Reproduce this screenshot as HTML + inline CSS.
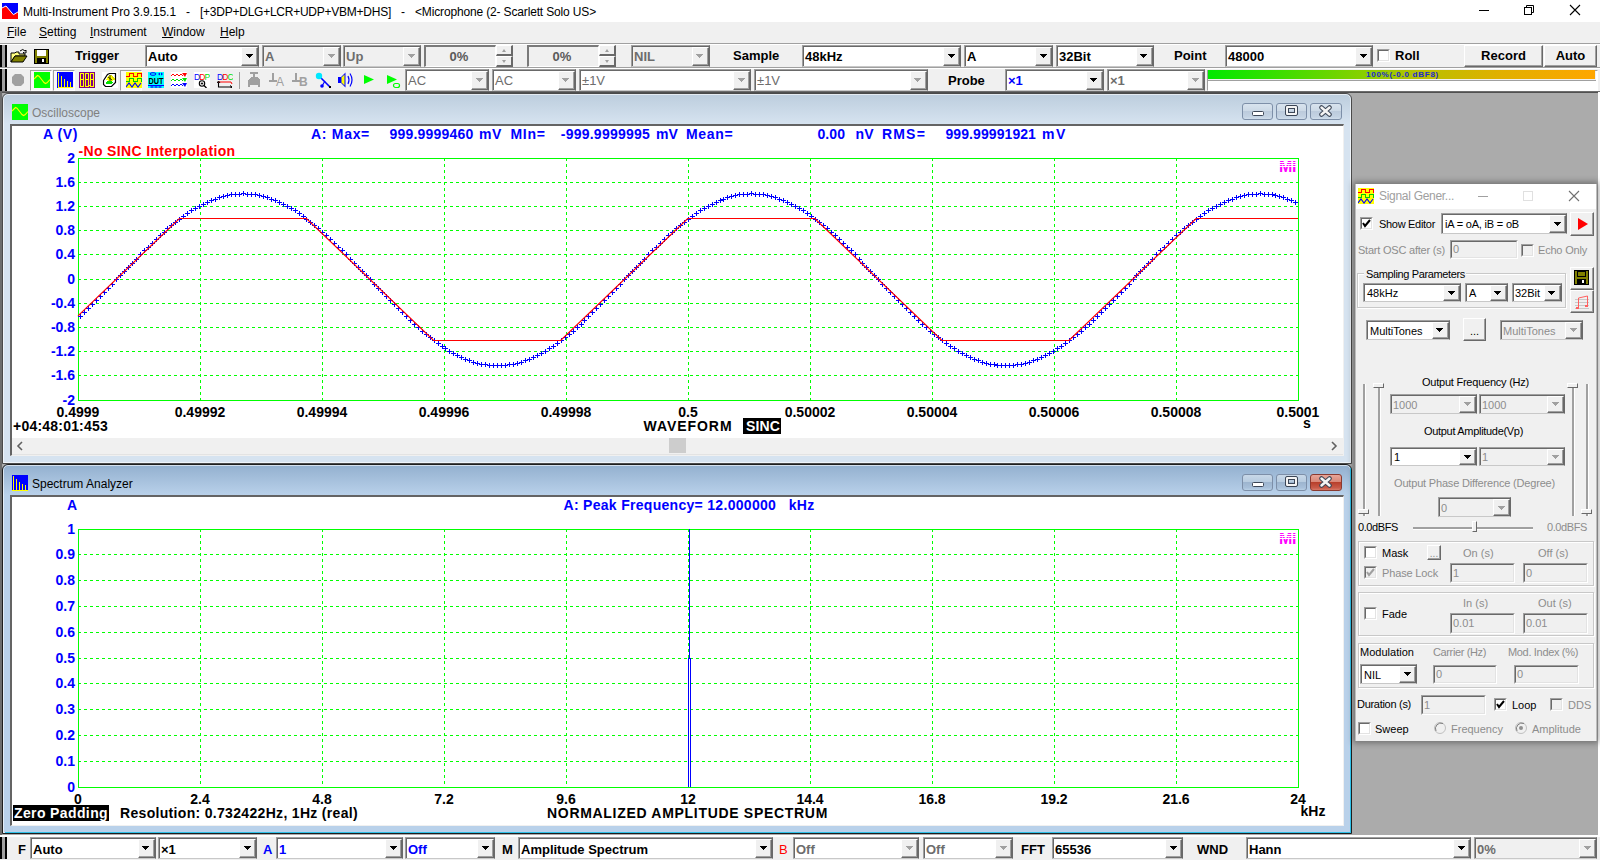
<!DOCTYPE html><html><head><meta charset="utf-8"><style>html,body{margin:0;padding:0;}body{width:1600px;height:860px;overflow:hidden;position:relative;background:#f0f0f0;font-family:'Liberation Sans', sans-serif;}</style></head><body>
<div style="position:absolute;left:0px;top:0px;width:1600px;height:22px;background:#fff"></div>
<svg style="position:absolute;left:2px;top:3px" width="16" height="16"><rect width="16" height="16" fill="#0000ff"/><path d="M0 16 L0 5 L4 3 L11.4 11.7 L16 8.9 L16 16 Z" fill="#ff0000"/><path d="M0 5 L4 3 L11.4 11.7 L16 8.9" stroke="#fff" stroke-width="1" fill="none"/></svg>
<div style="position:absolute;left:23px;top:5.84px;font:normal 12px/12px 'Liberation Sans', sans-serif;color:#000;white-space:pre;letter-spacing:-0.060px;">Multi-Instrument Pro 3.9.15.1</div>
<div style="position:absolute;left:186px;top:5.84px;font:normal 12px/12px 'Liberation Sans', sans-serif;color:#000;white-space:pre;">-</div>
<div style="position:absolute;left:200px;top:5.84px;font:normal 12px/12px 'Liberation Sans', sans-serif;color:#000;white-space:pre;letter-spacing:-0.247px;">[+3DP+DLG+LCR+UDP+VBM+DHS]</div>
<div style="position:absolute;left:401px;top:5.84px;font:normal 12px/12px 'Liberation Sans', sans-serif;color:#000;white-space:pre;">-</div>
<div style="position:absolute;left:415px;top:5.84px;font:normal 12px/12px 'Liberation Sans', sans-serif;color:#000;white-space:pre;letter-spacing:-0.154px;">&lt;Microphone (2- Scarlett Solo US&gt;</div>
<svg style="position:absolute;left:1470px;top:0px" width="130" height="22"><line x1="9" y1="10.5" x2="19" y2="10.5" stroke="#000" stroke-width="1"/><rect x="54.5" y="7.5" width="7" height="7" fill="none" stroke="#000"/><path d="M56.5 7.5 V5.5 H63.5 V12.5 H61.5" fill="none" stroke="#000"/><path d="M100 5 L110 15 M110 5 L100 15" stroke="#000" stroke-width="1.1"/></svg>
<div style="position:absolute;left:0px;top:22px;width:1600px;height:21px;background:#f0f0f0"></div>
<div style="position:absolute;left:7px;top:25.84px;font:normal 12px/12px 'Liberation Sans', sans-serif;color:#000;white-space:pre;"><u>F</u>ile</div>
<div style="position:absolute;left:39px;top:25.84px;font:normal 12px/12px 'Liberation Sans', sans-serif;color:#000;white-space:pre;"><u>S</u>etting</div>
<div style="position:absolute;left:90px;top:25.84px;font:normal 12px/12px 'Liberation Sans', sans-serif;color:#000;white-space:pre;"><u>I</u>nstrument</div>
<div style="position:absolute;left:162px;top:25.84px;font:normal 12px/12px 'Liberation Sans', sans-serif;color:#000;white-space:pre;"><u>W</u>indow</div>
<div style="position:absolute;left:220px;top:25.84px;font:normal 12px/12px 'Liberation Sans', sans-serif;color:#000;white-space:pre;"><u>H</u>elp</div>
<div style="position:absolute;left:0px;top:43px;width:1600px;height:1px;background:#a0a0a0"></div>
<div style="position:absolute;left:0px;top:44px;width:1600px;height:1px;background:#fff"></div>
<div style="position:absolute;left:0px;top:45px;width:2px;height:22px;background:#000"></div>
<div style="position:absolute;left:2px;top:45px;width:3px;height:22px;background:#a0a0a0"></div>
<div style="position:absolute;left:5px;top:45px;width:2px;height:22px;background:#000"></div>
<div style="position:absolute;left:0px;top:69px;width:2px;height:22px;background:#000"></div>
<div style="position:absolute;left:2px;top:69px;width:3px;height:22px;background:#a0a0a0"></div>
<div style="position:absolute;left:5px;top:69px;width:2px;height:22px;background:#000"></div>
<div style="position:absolute;left:0px;top:67px;width:1600px;height:1px;background:#a0a0a0"></div>
<div style="position:absolute;left:0px;top:68px;width:1600px;height:1px;background:#fff"></div>
<svg style="position:absolute;left:10px;top:48px" width="18" height="16"><path d="M1 5 L5 5 L6 4 L9 4 L9 6 L15 6 L15 8 L5 8 L1 14 Z" fill="#ffff80" stroke="#000" stroke-width="1"/><path d="M1 14 L5 8 L17 8 L13 14 Z" fill="#808000" stroke="#000" stroke-width="1"/><path d="M10 3 Q13 0 15 3 L16 2 L16 5 L13 5 L14 4" fill="none" stroke="#000" stroke-width="1"/></svg>
<svg style="position:absolute;left:34px;top:49px" width="15" height="15"><rect x="0.5" y="0.5" width="14" height="14" fill="#808000" stroke="#000"/><rect x="3" y="1" width="9" height="6" fill="#fff"/><rect x="3" y="9" width="9" height="5" fill="#000"/><rect x="8" y="10" width="2" height="3" fill="#fff"/></svg>
<div style="position:absolute;left:75px;top:49.00px;font:bold 13px/13px 'Liberation Sans', sans-serif;color:#000;white-space:pre;">Trigger</div>
<div style="position:absolute;left:145px;top:45px;width:114px;height:22px;box-sizing:border-box;background:#fff;border-top:1px solid #a0a0a0;border-left:1px solid #a0a0a0;border-right:1px solid #696969;border-bottom:1px solid #c8c8c8;"><div style="position:absolute;inset:0;border-top:1px solid #696969;border-left:1px solid #696969;"></div></div>
<div style="position:absolute;left:241px;top:47px;width:17px;height:19px;box-sizing:border-box;background:#f0f0f0;border-top:1px solid #fff;border-left:1px solid #fff;border-right:1px solid #696969;border-bottom:1px solid #696969;"><div style="position:absolute;inset:0;border-right:1px solid #a0a0a0;border-bottom:1px solid #a0a0a0;"></div></div>
<svg style="position:absolute;left:246px;top:54px" width="7" height="4" shape-rendering="crispEdges" fill="#000"><rect x="0" y="0" width="7" height="1"/><rect x="1" y="1" width="5" height="1"/><rect x="2" y="2" width="3" height="1"/><rect x="3" y="3" width="1" height="1"/></svg>
<div style="position:absolute;left:148px;top:50.00px;font:bold 13px/13px 'Liberation Sans', sans-serif;color:#000;white-space:pre;">Auto</div>
<div style="position:absolute;left:262px;top:45px;width:79px;height:22px;box-sizing:border-box;background:#f0f0f0;border-top:1px solid #a0a0a0;border-left:1px solid #a0a0a0;border-right:1px solid #696969;border-bottom:1px solid #c8c8c8;"><div style="position:absolute;inset:0;border-top:1px solid #696969;border-left:1px solid #696969;"></div></div>
<div style="position:absolute;left:323px;top:47px;width:17px;height:19px;box-sizing:border-box;background:#f0f0f0;border-top:1px solid #fff;border-left:1px solid #fff;border-right:1px solid #696969;border-bottom:1px solid #696969;"><div style="position:absolute;inset:0;border-right:1px solid #a0a0a0;border-bottom:1px solid #a0a0a0;"></div></div>
<svg style="position:absolute;left:328px;top:54px" width="7" height="4" shape-rendering="crispEdges" fill="#a0a0a0"><rect x="0" y="0" width="7" height="1"/><rect x="1" y="1" width="5" height="1"/><rect x="2" y="2" width="3" height="1"/><rect x="3" y="3" width="1" height="1"/></svg>
<div style="position:absolute;left:265px;top:50.00px;font:bold 13px/13px 'Liberation Sans', sans-serif;color:#6d6d6d;white-space:pre;">A</div>
<div style="position:absolute;left:343px;top:45px;width:78px;height:22px;box-sizing:border-box;background:#f0f0f0;border-top:1px solid #a0a0a0;border-left:1px solid #a0a0a0;border-right:1px solid #696969;border-bottom:1px solid #c8c8c8;"><div style="position:absolute;inset:0;border-top:1px solid #696969;border-left:1px solid #696969;"></div></div>
<div style="position:absolute;left:403px;top:47px;width:17px;height:19px;box-sizing:border-box;background:#f0f0f0;border-top:1px solid #fff;border-left:1px solid #fff;border-right:1px solid #696969;border-bottom:1px solid #696969;"><div style="position:absolute;inset:0;border-right:1px solid #a0a0a0;border-bottom:1px solid #a0a0a0;"></div></div>
<svg style="position:absolute;left:408px;top:54px" width="7" height="4" shape-rendering="crispEdges" fill="#a0a0a0"><rect x="0" y="0" width="7" height="1"/><rect x="1" y="1" width="5" height="1"/><rect x="2" y="2" width="3" height="1"/><rect x="3" y="3" width="1" height="1"/></svg>
<div style="position:absolute;left:346px;top:50.00px;font:bold 13px/13px 'Liberation Sans', sans-serif;color:#6d6d6d;white-space:pre;">Up</div>
<div style="position:absolute;left:424px;top:45px;width:89px;height:22px;box-sizing:border-box;background:#f0f0f0;border-top:1px solid #a0a0a0;border-left:1px solid #a0a0a0;border-right:1px solid #696969;border-bottom:1px solid #c8c8c8;"><div style="position:absolute;inset:0;border-top:1px solid #696969;border-left:1px solid #696969;"></div></div>
<div style="position:absolute;left:496px;top:45px;width:17px;height:22px;background:#f0f0f0"></div>
<div style="position:absolute;left:424px;top:45px;width:72px;height:22px;box-sizing:border-box;background:#f0f0f0;border-top:2px solid #7a7a7a;border-left:2px solid #7a7a7a;border-right:1px solid #fff;border-bottom:1px solid #fff"></div>
<div style="position:absolute;left:-41.0px;width:1000px;text-align:center;top:50.00px;font:bold 13px/13px 'Liberation Sans', sans-serif;color:#5a5a5a;white-space:pre;">0%</div>
<div style="position:absolute;left:496px;top:45px;width:17px;height:11px;box-sizing:border-box;background:#f0f0f0;border-top:1px solid #fff;border-left:1px solid #fff;border-right:2px solid #696969;border-bottom:2px solid #696969"></div>
<div style="position:absolute;left:496px;top:56px;width:17px;height:11px;box-sizing:border-box;background:#f0f0f0;border-top:1px solid #fff;border-left:1px solid #fff;border-right:2px solid #696969;border-bottom:2px solid #696969"></div>
<div style="position:absolute;left:502.0px;top:49px;width:0;height:0;border-left:2.5px solid transparent;border-right:2.5px solid transparent;border-bottom:3px solid #a0a0a0"></div>
<div style="position:absolute;left:502.0px;top:60px;width:0;height:0;border-left:2.5px solid transparent;border-right:2.5px solid transparent;border-top:3px solid #a0a0a0"></div>
<div style="position:absolute;left:527px;top:45px;width:89px;height:22px;box-sizing:border-box;background:#f0f0f0;border-top:1px solid #a0a0a0;border-left:1px solid #a0a0a0;border-right:1px solid #696969;border-bottom:1px solid #c8c8c8;"><div style="position:absolute;inset:0;border-top:1px solid #696969;border-left:1px solid #696969;"></div></div>
<div style="position:absolute;left:599px;top:45px;width:17px;height:22px;background:#f0f0f0"></div>
<div style="position:absolute;left:527px;top:45px;width:72px;height:22px;box-sizing:border-box;background:#f0f0f0;border-top:2px solid #7a7a7a;border-left:2px solid #7a7a7a;border-right:1px solid #fff;border-bottom:1px solid #fff"></div>
<div style="position:absolute;left:62.0px;width:1000px;text-align:center;top:50.00px;font:bold 13px/13px 'Liberation Sans', sans-serif;color:#5a5a5a;white-space:pre;">0%</div>
<div style="position:absolute;left:599px;top:45px;width:17px;height:11px;box-sizing:border-box;background:#f0f0f0;border-top:1px solid #fff;border-left:1px solid #fff;border-right:2px solid #696969;border-bottom:2px solid #696969"></div>
<div style="position:absolute;left:599px;top:56px;width:17px;height:11px;box-sizing:border-box;background:#f0f0f0;border-top:1px solid #fff;border-left:1px solid #fff;border-right:2px solid #696969;border-bottom:2px solid #696969"></div>
<div style="position:absolute;left:605.0px;top:49px;width:0;height:0;border-left:2.5px solid transparent;border-right:2.5px solid transparent;border-bottom:3px solid #a0a0a0"></div>
<div style="position:absolute;left:605.0px;top:60px;width:0;height:0;border-left:2.5px solid transparent;border-right:2.5px solid transparent;border-top:3px solid #a0a0a0"></div>
<div style="position:absolute;left:631px;top:45px;width:79px;height:22px;box-sizing:border-box;background:#f0f0f0;border-top:1px solid #a0a0a0;border-left:1px solid #a0a0a0;border-right:1px solid #696969;border-bottom:1px solid #c8c8c8;"><div style="position:absolute;inset:0;border-top:1px solid #696969;border-left:1px solid #696969;"></div></div>
<div style="position:absolute;left:692px;top:47px;width:17px;height:19px;box-sizing:border-box;background:#f0f0f0;border-top:1px solid #fff;border-left:1px solid #fff;border-right:1px solid #696969;border-bottom:1px solid #696969;"><div style="position:absolute;inset:0;border-right:1px solid #a0a0a0;border-bottom:1px solid #a0a0a0;"></div></div>
<svg style="position:absolute;left:696px;top:54px" width="7" height="4" shape-rendering="crispEdges" fill="#a0a0a0"><rect x="0" y="0" width="7" height="1"/><rect x="1" y="1" width="5" height="1"/><rect x="2" y="2" width="3" height="1"/><rect x="3" y="3" width="1" height="1"/></svg>
<div style="position:absolute;left:634px;top:50.00px;font:bold 13px/13px 'Liberation Sans', sans-serif;color:#6d6d6d;white-space:pre;">NIL</div>
<div style="position:absolute;left:733px;top:49.00px;font:bold 13px/13px 'Liberation Sans', sans-serif;color:#000;white-space:pre;">Sample</div>
<div style="position:absolute;left:802px;top:45px;width:159px;height:22px;box-sizing:border-box;background:#fff;border-top:1px solid #a0a0a0;border-left:1px solid #a0a0a0;border-right:1px solid #696969;border-bottom:1px solid #c8c8c8;"><div style="position:absolute;inset:0;border-top:1px solid #696969;border-left:1px solid #696969;"></div></div>
<div style="position:absolute;left:943px;top:47px;width:17px;height:19px;box-sizing:border-box;background:#f0f0f0;border-top:1px solid #fff;border-left:1px solid #fff;border-right:1px solid #696969;border-bottom:1px solid #696969;"><div style="position:absolute;inset:0;border-right:1px solid #a0a0a0;border-bottom:1px solid #a0a0a0;"></div></div>
<svg style="position:absolute;left:948px;top:54px" width="7" height="4" shape-rendering="crispEdges" fill="#000"><rect x="0" y="0" width="7" height="1"/><rect x="1" y="1" width="5" height="1"/><rect x="2" y="2" width="3" height="1"/><rect x="3" y="3" width="1" height="1"/></svg>
<div style="position:absolute;left:805px;top:50.00px;font:bold 13px/13px 'Liberation Sans', sans-serif;color:#000;white-space:pre;">48kHz</div>
<div style="position:absolute;left:964px;top:45px;width:89px;height:22px;box-sizing:border-box;background:#fff;border-top:1px solid #a0a0a0;border-left:1px solid #a0a0a0;border-right:1px solid #696969;border-bottom:1px solid #c8c8c8;"><div style="position:absolute;inset:0;border-top:1px solid #696969;border-left:1px solid #696969;"></div></div>
<div style="position:absolute;left:1035px;top:47px;width:17px;height:19px;box-sizing:border-box;background:#f0f0f0;border-top:1px solid #fff;border-left:1px solid #fff;border-right:1px solid #696969;border-bottom:1px solid #696969;"><div style="position:absolute;inset:0;border-right:1px solid #a0a0a0;border-bottom:1px solid #a0a0a0;"></div></div>
<svg style="position:absolute;left:1040px;top:54px" width="7" height="4" shape-rendering="crispEdges" fill="#000"><rect x="0" y="0" width="7" height="1"/><rect x="1" y="1" width="5" height="1"/><rect x="2" y="2" width="3" height="1"/><rect x="3" y="3" width="1" height="1"/></svg>
<div style="position:absolute;left:967px;top:50.00px;font:bold 13px/13px 'Liberation Sans', sans-serif;color:#000;white-space:pre;">A</div>
<div style="position:absolute;left:1056px;top:45px;width:98px;height:22px;box-sizing:border-box;background:#fff;border-top:1px solid #a0a0a0;border-left:1px solid #a0a0a0;border-right:1px solid #696969;border-bottom:1px solid #c8c8c8;"><div style="position:absolute;inset:0;border-top:1px solid #696969;border-left:1px solid #696969;"></div></div>
<div style="position:absolute;left:1136px;top:47px;width:17px;height:19px;box-sizing:border-box;background:#f0f0f0;border-top:1px solid #fff;border-left:1px solid #fff;border-right:1px solid #696969;border-bottom:1px solid #696969;"><div style="position:absolute;inset:0;border-right:1px solid #a0a0a0;border-bottom:1px solid #a0a0a0;"></div></div>
<svg style="position:absolute;left:1140px;top:54px" width="7" height="4" shape-rendering="crispEdges" fill="#000"><rect x="0" y="0" width="7" height="1"/><rect x="1" y="1" width="5" height="1"/><rect x="2" y="2" width="3" height="1"/><rect x="3" y="3" width="1" height="1"/></svg>
<div style="position:absolute;left:1059px;top:50.00px;font:bold 13px/13px 'Liberation Sans', sans-serif;color:#000;white-space:pre;">32Bit</div>
<div style="position:absolute;left:1174px;top:49.00px;font:bold 13px/13px 'Liberation Sans', sans-serif;color:#000;white-space:pre;">Point</div>
<div style="position:absolute;left:1225px;top:45px;width:148px;height:22px;box-sizing:border-box;background:#fff;border-top:1px solid #a0a0a0;border-left:1px solid #a0a0a0;border-right:1px solid #696969;border-bottom:1px solid #c8c8c8;"><div style="position:absolute;inset:0;border-top:1px solid #696969;border-left:1px solid #696969;"></div></div>
<div style="position:absolute;left:1355px;top:47px;width:17px;height:19px;box-sizing:border-box;background:#f0f0f0;border-top:1px solid #fff;border-left:1px solid #fff;border-right:1px solid #696969;border-bottom:1px solid #696969;"><div style="position:absolute;inset:0;border-right:1px solid #a0a0a0;border-bottom:1px solid #a0a0a0;"></div></div>
<svg style="position:absolute;left:1360px;top:54px" width="7" height="4" shape-rendering="crispEdges" fill="#000"><rect x="0" y="0" width="7" height="1"/><rect x="1" y="1" width="5" height="1"/><rect x="2" y="2" width="3" height="1"/><rect x="3" y="3" width="1" height="1"/></svg>
<div style="position:absolute;left:1228px;top:50.00px;font:bold 13px/13px 'Liberation Sans', sans-serif;color:#000;white-space:pre;">48000</div>
<div style="position:absolute;left:1377px;top:49px;width:13px;height:13px;box-sizing:border-box;background:#fff;border-top:1px solid #a0a0a0;border-left:1px solid #a0a0a0;border-right:1px solid #fff;border-bottom:1px solid #fff"><div style="position:absolute;inset:0;border-top:1px solid #696969;border-left:1px solid #696969;border-right:1px solid #e3e3e3;border-bottom:1px solid #e3e3e3"></div></div>
<div style="position:absolute;left:1395px;top:49.00px;font:bold 13px/13px 'Liberation Sans', sans-serif;color:#000;white-space:pre;">Roll</div>
<div style="position:absolute;left:1464px;top:45px;width:79px;height:22px;box-sizing:border-box;background:#f0f0f0;border-top:1px solid #fff;border-left:1px solid #fff;border-right:1px solid #696969;border-bottom:1px solid #696969"><div style="position:absolute;inset:0;border-right:1px solid #a0a0a0;border-bottom:1px solid #a0a0a0"></div></div>
<div style="position:absolute;left:1003.5px;width:1000px;text-align:center;top:49.00px;font:bold 13px/13px 'Liberation Sans', sans-serif;color:#000;white-space:pre;">Record</div>
<div style="position:absolute;left:1544px;top:45px;width:53px;height:22px;box-sizing:border-box;background:#f0f0f0;border-top:1px solid #fff;border-left:1px solid #fff;border-right:1px solid #696969;border-bottom:1px solid #696969"><div style="position:absolute;inset:0;border-right:1px solid #a0a0a0;border-bottom:1px solid #a0a0a0"></div></div>
<div style="position:absolute;left:1070.5px;width:1000px;text-align:center;top:49.00px;font:bold 13px/13px 'Liberation Sans', sans-serif;color:#000;white-space:pre;">Auto</div>
<svg style="position:absolute;left:11px;top:73px" width="14" height="14"><path d="M4 1 H10 L13 4 V10 L10 13 H4 L1 10 V4 Z" fill="#a0a0a0"/></svg>
<div style="position:absolute;left:30px;top:70px;width:22px;height:21px;box-sizing:border-box;border-top:1px solid #a0a0a0;border-left:1px solid #a0a0a0;border-right:1px solid #fff;border-bottom:1px solid #fff;background:#f8f8f8"></div>
<div style="position:absolute;left:53px;top:70px;width:22px;height:21px;box-sizing:border-box;border-top:1px solid #a0a0a0;border-left:1px solid #a0a0a0;border-right:1px solid #fff;border-bottom:1px solid #fff;background:#f8f8f8"></div>
<div style="position:absolute;left:120px;top:70px;width:22px;height:21px;box-sizing:border-box;border-top:1px solid #a0a0a0;border-left:1px solid #a0a0a0;border-right:1px solid #fff;border-bottom:1px solid #fff;background:#f8f8f8"></div>
<svg style="position:absolute;left:34px;top:72px" width="16" height="16"><rect width="16" height="16" fill="#00ff00"/><path d="M0 7 L2 5 L3.5 3.5 L5 4.2 L8 8 L10 10.5 L11.5 11.5 L13 10.8 L16 7.5" stroke="#ffff00" fill="none" stroke-width="1.1"/></svg>
<svg style="position:absolute;left:57px;top:72px" width="16" height="16"><rect width="16" height="16" fill="#0000ff"/><path d="M1 15.5 H16 M1.5 1 V15 M4.5 4 V15 M7.5 7 V15 M10.5 9 V15 M13.5 10 V15" stroke="#ffff00" stroke-width="1"/></svg>
<svg style="position:absolute;left:79px;top:72px" width="16" height="16"><rect width="16" height="16" fill="#800080"/><g fill="none" stroke="#ffff00" stroke-width="1" shape-rendering="crispEdges"><rect x="1.5" y="1.5" width="3" height="6" /><rect x="1.5" y="7.5" width="3" height="7" /><rect x="6.5" y="1.5" width="3" height="6" /><rect x="6.5" y="7.5" width="3" height="7" /><rect x="11.5" y="1.5" width="3" height="6" /><rect x="11.5" y="7.5" width="3" height="7" /></g><rect x="10" y="13" width="1" height="1" fill="#ffff00"/></svg>
<svg style="position:absolute;left:102px;top:72px" width="16" height="16" shape-rendering="crispEdges"><rect width="16" height="16" fill="#fff"/><path d="M1.5 8.5 L5.5 2.5 L7.5 1.5 H13.5 V10.5 L9.5 14.5 H3.5 L1.5 12.5 Z" fill="none" stroke="#000" stroke-width="1.2" shape-rendering="auto"/><path d="M4 8 L6 4 L8 3 L10 4 L12 7 L11 9 L8 9 Z" fill="#ffff00"/><path d="M9 3 L13 7 L12 9 Z" fill="#e0e000"/><path d="M3 11 L5 9 L9 9 L11 10 L10 12 L5 12 Z" fill="#00e000"/><path d="M8 3 V9 M6 5 L10 8" stroke="#000" stroke-width="0.8" shape-rendering="auto"/></svg>
<svg style="position:absolute;left:126px;top:72px" width="16" height="16" shape-rendering="crispEdges"><rect width="16" height="16" fill="#ffff00"/><path d="M0 4.5 H3.5 V1.5 H7.5 V4.5 H11.5 V1.5 H15.5 V4.5" stroke="#ff0000" fill="none" stroke-width="1.2"/><path d="M0 9.5 H3.5 V6.5 H7.5 V9.5 H11.5 V6.5 H15.5 V9.5" stroke="#00d000" fill="none" stroke-width="1.2"/><path d="M0 15 L3 11 L6 15 L9 11 L12 15 L15 11" stroke="#0000ff" fill="none" stroke-width="1.1" shape-rendering="auto"/></svg>
<svg style="position:absolute;left:148px;top:72px" width="16" height="16"><rect width="16" height="16" fill="#00ffff"/><ellipse cx="5" cy="2" rx="3" ry="1.3" fill="none" stroke="#0000ff" stroke-width="1"/><path d="M10 2 L12 0.5 V3.5 Z M15 2 L13 0.5 V3.5 Z" fill="#0000ff"/><text x="8" y="12" text-anchor="middle" font-family="Liberation Sans" font-weight="bold" font-size="9" fill="#000" textLength="15" lengthAdjust="spacingAndGlyphs">DUT</text><path d="M0 13.5 H16" stroke="#0000ff"/><circle cx="4" cy="15" r="1.1" fill="none" stroke="#0000ff" stroke-width="0.8"/><circle cx="8" cy="15" r="1.1" fill="none" stroke="#0000ff" stroke-width="0.8"/><circle cx="12" cy="15" r="1.1" fill="none" stroke="#0000ff" stroke-width="0.8"/></svg>
<svg style="position:absolute;left:171px;top:72px" width="16" height="16"><rect width="16" height="16" fill="#fff"/><path d="M0 4 L2 2 L4 4 L6 2 L8 4 L10 2 L12 4" stroke="#ff0000" fill="none"/><path d="M0 9 L2 7 L4 9 L6 7 L8 9 L10 7 L12 9" stroke="#00e000" fill="none"/><path d="M0 14 L2 12 L4 14 L6 12 L8 14 L10 12 L12 14" stroke="#0000ff" fill="none"/><path d="M11 1 H16 L14 5 Z" fill="#ff0000"/><path d="M11 6 H16 L14 10 Z" fill="#00e000"/><path d="M11 11 H16 L14 15 Z" fill="#0000ff"/></svg>
<svg style="position:absolute;left:194px;top:72px" width="16" height="16"><rect width="16" height="16" fill="#fff"/><text x="0" y="7.5" font-family="Liberation Sans" font-size="8.5" fill="#0000ff">D</text><text x="5.3" y="7.5" font-family="Liberation Sans" font-size="8.5" fill="#ff0000">D</text><text x="10.6" y="7.5" font-family="Liberation Sans" font-size="8.5" fill="#00e000">P</text><circle cx="8" cy="11.5" r="2.7" fill="none" stroke="#000" stroke-width="1.1"/><path d="M6.8 11.5 H9.2 M8 10.3 V12.7" stroke="#000" stroke-width="0.9"/><path d="M10 13.5 L12.5 16" stroke="#000" stroke-width="1.3"/></svg>
<svg style="position:absolute;left:217px;top:72px" width="16" height="16"><text x="0" y="7.5" font-family="Liberation Sans" font-size="8.5" fill="#0000ff">D</text><text x="5.3" y="7.5" font-family="Liberation Sans" font-size="8.5" fill="#ff0000">D</text><text x="10.6" y="7.5" font-family="Liberation Sans" font-size="8.5" fill="#00e000">C</text><path d="M1.5 10 V15 H15" stroke="#000" fill="none" stroke-width="1.1"/><path d="M1.5 10 H14 L15 12" stroke="#ff0000" fill="none" stroke-width="1"/><path d="M0 11 L1.5 9 L3 11 M13 13.5 L15 15 L13 16.5" stroke="#000" fill="none" stroke-width="1"/></svg>
<div style="position:absolute;left:239px;top:72px;width:1px;height:17px;background:#a0a0a0"></div>
<svg style="position:absolute;left:247px;top:72px" width="14" height="16" shape-rendering="crispEdges" fill="#a0a0a0"><rect x="3" y="0" width="8" height="2"/><rect x="6" y="2" width="2" height="3"/><path d="M4 5 H10 L13 8 V15 H11 V13 H3 V15 H1 V8 Z"/></svg>
<svg style="position:absolute;left:268px;top:72px" width="40" height="16" shape-rendering="crispEdges" fill="#a0a0a0"><rect x="4" y="1" width="2" height="8"/><rect x="1" y="8" width="8" height="2"/><rect x="27" y="1" width="2" height="8"/><rect x="24" y="8" width="8" height="2"/></svg>
<div style="position:absolute;left:276px;top:75.84px;font:normal 12px/12px 'Liberation Sans', sans-serif;color:#a0a0a0;white-space:pre;">A</div>
<div style="position:absolute;left:299px;top:75.84px;font:bold 12px/12px 'Liberation Sans', sans-serif;color:#a0a0a0;white-space:pre;">B</div>
<svg style="position:absolute;left:315px;top:72px" width="17" height="16"><path d="M5 5 L15 15" stroke="#0000ff" stroke-width="1.6"/><path d="M10 9 L7 14" stroke="#0000ff" stroke-width="1.2"/><circle cx="4" cy="4" r="3.2" fill="#00e8ff"/><circle cx="7" cy="14" r="1.8" fill="#0000ff"/><rect x="14" y="14" width="2" height="2" fill="#000"/></svg>
<svg style="position:absolute;left:337px;top:72px" width="18" height="16"><path d="M1 5 H4 L8.5 0.5 V15.5 L4 11 H1 Z" fill="#0000ff"/><path d="M4.5 5.5 L7.5 2.5 V13.5 L4.5 10.5 Z" fill="#ffff00"/><path d="M11 4 Q13 8 11 12 M13 1.5 Q17 8 13 14.5" stroke="#0000ff" fill="none" stroke-width="1.2"/></svg>
<svg style="position:absolute;left:363px;top:74px" width="13" height="12"><path d="M1 1 L11 5.5 L1 10 Z" fill="#00ff00"/></svg>
<svg style="position:absolute;left:386px;top:74px" width="16" height="15"><path d="M1 1 L11 5.5 L1 10 Z" fill="#00ff00"/><rect x="7.5" y="9.5" width="6" height="4" rx="2" fill="none" stroke="#00ff00" stroke-width="1.2"/></svg>
<div style="position:absolute;left:405px;top:69px;width:84px;height:22px;box-sizing:border-box;background:#fff;border-top:1px solid #a0a0a0;border-left:1px solid #a0a0a0;border-right:1px solid #696969;border-bottom:1px solid #c8c8c8;"><div style="position:absolute;inset:0;border-top:1px solid #696969;border-left:1px solid #696969;"></div></div>
<div style="position:absolute;left:471px;top:71px;width:17px;height:19px;box-sizing:border-box;background:#f0f0f0;border-top:1px solid #fff;border-left:1px solid #fff;border-right:1px solid #696969;border-bottom:1px solid #696969;"><div style="position:absolute;inset:0;border-right:1px solid #a0a0a0;border-bottom:1px solid #a0a0a0;"></div></div>
<svg style="position:absolute;left:476px;top:78px" width="7" height="4" shape-rendering="crispEdges" fill="#a0a0a0"><rect x="0" y="0" width="7" height="1"/><rect x="1" y="1" width="5" height="1"/><rect x="2" y="2" width="3" height="1"/><rect x="3" y="3" width="1" height="1"/></svg>
<div style="position:absolute;left:408px;top:74.00px;font:normal 13px/13px 'Liberation Sans', sans-serif;color:#6d6d6d;white-space:pre;">AC</div>
<div style="position:absolute;left:492px;top:69px;width:84px;height:22px;box-sizing:border-box;background:#fff;border-top:1px solid #a0a0a0;border-left:1px solid #a0a0a0;border-right:1px solid #696969;border-bottom:1px solid #c8c8c8;"><div style="position:absolute;inset:0;border-top:1px solid #696969;border-left:1px solid #696969;"></div></div>
<div style="position:absolute;left:558px;top:71px;width:17px;height:19px;box-sizing:border-box;background:#f0f0f0;border-top:1px solid #fff;border-left:1px solid #fff;border-right:1px solid #696969;border-bottom:1px solid #696969;"><div style="position:absolute;inset:0;border-right:1px solid #a0a0a0;border-bottom:1px solid #a0a0a0;"></div></div>
<svg style="position:absolute;left:562px;top:78px" width="7" height="4" shape-rendering="crispEdges" fill="#a0a0a0"><rect x="0" y="0" width="7" height="1"/><rect x="1" y="1" width="5" height="1"/><rect x="2" y="2" width="3" height="1"/><rect x="3" y="3" width="1" height="1"/></svg>
<div style="position:absolute;left:495px;top:74.00px;font:normal 13px/13px 'Liberation Sans', sans-serif;color:#6d6d6d;white-space:pre;">AC</div>
<div style="position:absolute;left:579px;top:69px;width:172px;height:22px;box-sizing:border-box;background:#fff;border-top:1px solid #a0a0a0;border-left:1px solid #a0a0a0;border-right:1px solid #696969;border-bottom:1px solid #c8c8c8;"><div style="position:absolute;inset:0;border-top:1px solid #696969;border-left:1px solid #696969;"></div></div>
<div style="position:absolute;left:733px;top:71px;width:17px;height:19px;box-sizing:border-box;background:#f0f0f0;border-top:1px solid #fff;border-left:1px solid #fff;border-right:1px solid #696969;border-bottom:1px solid #696969;"><div style="position:absolute;inset:0;border-right:1px solid #a0a0a0;border-bottom:1px solid #a0a0a0;"></div></div>
<svg style="position:absolute;left:738px;top:78px" width="7" height="4" shape-rendering="crispEdges" fill="#a0a0a0"><rect x="0" y="0" width="7" height="1"/><rect x="1" y="1" width="5" height="1"/><rect x="2" y="2" width="3" height="1"/><rect x="3" y="3" width="1" height="1"/></svg>
<div style="position:absolute;left:582px;top:74.00px;font:normal 13px/13px 'Liberation Sans', sans-serif;color:#6d6d6d;white-space:pre;">±1V</div>
<div style="position:absolute;left:754px;top:69px;width:174px;height:22px;box-sizing:border-box;background:#fff;border-top:1px solid #a0a0a0;border-left:1px solid #a0a0a0;border-right:1px solid #696969;border-bottom:1px solid #c8c8c8;"><div style="position:absolute;inset:0;border-top:1px solid #696969;border-left:1px solid #696969;"></div></div>
<div style="position:absolute;left:910px;top:71px;width:17px;height:19px;box-sizing:border-box;background:#f0f0f0;border-top:1px solid #fff;border-left:1px solid #fff;border-right:1px solid #696969;border-bottom:1px solid #696969;"><div style="position:absolute;inset:0;border-right:1px solid #a0a0a0;border-bottom:1px solid #a0a0a0;"></div></div>
<svg style="position:absolute;left:914px;top:78px" width="7" height="4" shape-rendering="crispEdges" fill="#a0a0a0"><rect x="0" y="0" width="7" height="1"/><rect x="1" y="1" width="5" height="1"/><rect x="2" y="2" width="3" height="1"/><rect x="3" y="3" width="1" height="1"/></svg>
<div style="position:absolute;left:757px;top:74.00px;font:normal 13px/13px 'Liberation Sans', sans-serif;color:#6d6d6d;white-space:pre;">±1V</div>
<div style="position:absolute;left:948px;top:74.00px;font:bold 13px/13px 'Liberation Sans', sans-serif;color:#000;white-space:pre;">Probe</div>
<div style="position:absolute;left:1005px;top:69px;width:99px;height:22px;box-sizing:border-box;background:#fff;border-top:1px solid #a0a0a0;border-left:1px solid #a0a0a0;border-right:1px solid #696969;border-bottom:1px solid #c8c8c8;"><div style="position:absolute;inset:0;border-top:1px solid #696969;border-left:1px solid #696969;"></div></div>
<div style="position:absolute;left:1086px;top:71px;width:17px;height:19px;box-sizing:border-box;background:#f0f0f0;border-top:1px solid #fff;border-left:1px solid #fff;border-right:1px solid #696969;border-bottom:1px solid #696969;"><div style="position:absolute;inset:0;border-right:1px solid #a0a0a0;border-bottom:1px solid #a0a0a0;"></div></div>
<svg style="position:absolute;left:1090px;top:78px" width="7" height="4" shape-rendering="crispEdges" fill="#000"><rect x="0" y="0" width="7" height="1"/><rect x="1" y="1" width="5" height="1"/><rect x="2" y="2" width="3" height="1"/><rect x="3" y="3" width="1" height="1"/></svg>
<div style="position:absolute;left:1008px;top:74.00px;font:bold 13px/13px 'Liberation Sans', sans-serif;color:#0000ff;white-space:pre;">×1</div>
<div style="position:absolute;left:1107px;top:69px;width:98px;height:22px;box-sizing:border-box;background:#fff;border-top:1px solid #a0a0a0;border-left:1px solid #a0a0a0;border-right:1px solid #696969;border-bottom:1px solid #c8c8c8;"><div style="position:absolute;inset:0;border-top:1px solid #696969;border-left:1px solid #696969;"></div></div>
<div style="position:absolute;left:1187px;top:71px;width:17px;height:19px;box-sizing:border-box;background:#f0f0f0;border-top:1px solid #fff;border-left:1px solid #fff;border-right:1px solid #696969;border-bottom:1px solid #696969;"><div style="position:absolute;inset:0;border-right:1px solid #a0a0a0;border-bottom:1px solid #a0a0a0;"></div></div>
<svg style="position:absolute;left:1192px;top:78px" width="7" height="4" shape-rendering="crispEdges" fill="#a0a0a0"><rect x="0" y="0" width="7" height="1"/><rect x="1" y="1" width="5" height="1"/><rect x="2" y="2" width="3" height="1"/><rect x="3" y="3" width="1" height="1"/></svg>
<div style="position:absolute;left:1110px;top:74.00px;font:bold 13px/13px 'Liberation Sans', sans-serif;color:#6d6d6d;white-space:pre;">×1</div>
<div style="position:absolute;left:1207px;top:70px;width:391px;height:21px;box-sizing:border-box;border-top:1px solid #a0a0a0;border-left:1px solid #a0a0a0;border-right:1px solid #fff;border-bottom:1px solid #fff;background:#fff"></div>
<div style="position:absolute;left:1208px;top:71px;width:388px;height:9px;background:#f0f0f0"></div>
<div style="position:absolute;left:1208px;top:70px;width:387px;height:9px;background:linear-gradient(to right,#00e800,#30e000 15%,#88d000 40%,#b8c000 55%,#e0b000 75%,#ffa600)"></div>
<div style="position:absolute;left:1366px;top:70.73px;font:bold 8px/8px 'Liberation Sans', sans-serif;color:#1a2ad0;white-space:pre;letter-spacing:0.747px;">100%(-0.0 dBF8)</div>
<div style="position:absolute;left:1208px;top:80px;width:388px;height:1px;background:#a0a0a0"></div>
<div style="position:absolute;left:0px;top:91px;width:1600px;height:1px;background:#6d6d6d"></div>
<div style="position:absolute;left:0px;top:92px;width:1598px;height:743px;background:#ababab"></div>
<div style="position:absolute;left:0px;top:92px;width:1598px;height:1px;background:#505050"></div>
<div style="position:absolute;left:1598px;top:92px;width:2px;height:743px;background:#fff"></div>
<div style="position:absolute;left:0px;top:92px;width:2px;height:743px;background:#6d6d6d"></div>
<div style="position:absolute;left:2px;top:93px;width:1350px;height:371px;box-sizing:border-box;border:1px solid #4a4a4a;border-radius:6px 6px 0 0;background:linear-gradient(to bottom,#bccddd 0px,#d6e3f0 30px,#d6e3f0 100%);overflow:hidden"><div style="position:absolute;inset:0;border:1px solid rgba(255,255,255,0.6);border-radius:5px 5px 0 0"></div></div>
<svg style="position:absolute;left:12px;top:104px" width="16" height="16"><rect width="16" height="16" fill="#00ff00"/><path d="M0 7 L2 5 L3.5 3.5 L5 4.2 L8 8 L10 10.5 L11.5 11.5 L13 10.8 L16 7.5" stroke="#ffff00" fill="none" stroke-width="1.1"/></svg>
<div style="position:absolute;left:32px;top:106.84px;font:normal 12px/12px 'Liberation Sans', sans-serif;color:#808080;white-space:pre;">Oscilloscope</div>
<div style="position:absolute;left:1242px;top:103px;width:31px;height:17px;box-sizing:border-box;border:1px solid #7d8fa8;border-radius:3px;background:linear-gradient(to bottom,#d8e3ee,#ccd9e6 45%,#bccbdc 50%,#c4d3e3 85%,#d0deeb)"></div>
<div style="position:absolute;left:1252px;top:111px;width:10px;height:3px;background:#fff;border:1px solid #3c4656;border-radius:1.5px"></div>
<div style="position:absolute;left:1276px;top:103px;width:31px;height:17px;box-sizing:border-box;border:1px solid #7d8fa8;border-radius:3px;background:linear-gradient(to bottom,#d8e3ee,#ccd9e6 45%,#bccbdc 50%,#c4d3e3 85%,#d0deeb)"></div>
<div style="position:absolute;left:1286px;top:106px;width:7px;height:5px;border:2px solid #f4f4f4;outline:1px solid #3c4656;box-shadow:inset 0 0 0 1px #3c4656;border-radius:1px"></div>
<div style="position:absolute;left:1310px;top:103px;width:32px;height:17px;box-sizing:border-box;border:1px solid #7d8fa8;border-radius:3px;background:linear-gradient(to bottom,#d8e3ee,#ccd9e6 45%,#bccbdc 50%,#c4d3e3 85%,#d0deeb)"></div>
<svg style="position:absolute;left:1319px;top:105px" width="13" height="12"><path d="M2.5 2.5 L10.5 9.5 M10.5 2.5 L2.5 9.5" stroke="#3c4656" stroke-width="4.5" stroke-linecap="round"/><path d="M2.5 2.5 L10.5 9.5 M10.5 2.5 L2.5 9.5" stroke="#f4f4f4" stroke-width="2.5" stroke-linecap="round"/></svg>
<div style="position:absolute;left:10px;top:124px;width:1334px;height:332px;box-sizing:border-box;background:#fff;border-top:2px solid #646464;border-left:2px solid #646464;border-right:1px solid #f0f0f0;border-bottom:1px solid #f0f0f0"></div>
<div style="position:absolute;left:2px;top:464px;width:1350px;height:370px;box-sizing:border-box;border:1px solid #1e1e1e;border-radius:6px 6px 0 0;background:linear-gradient(to bottom,#93b0cf 0px,#b9d1ea 30px,#b9d1ea 100%);overflow:hidden"><div style="position:absolute;inset:0;border:1px solid rgba(255,255,255,0.6);border-radius:5px 5px 0 0"></div></div>
<div style="position:absolute;left:1350px;top:468px;width:1px;height:365px;background:#2ec0e8"></div>
<div style="position:absolute;left:5px;top:832px;width:1345px;height:1px;background:#2ec0e8"></div>
<svg style="position:absolute;left:12px;top:475px" width="16" height="16"><rect width="16" height="16" fill="#0000ff"/><path d="M0 15.5 H16 M1.5 1 V15 M4.5 4 V15 M7.5 7 V15 M10.5 9 V15 M13.5 10 V15" stroke="#ffff00" stroke-width="1"/></svg>
<div style="position:absolute;left:32px;top:477.84px;font:normal 12px/12px 'Liberation Sans', sans-serif;color:#000;white-space:pre;">Spectrum Analyzer</div>
<div style="position:absolute;left:1242px;top:474px;width:31px;height:17px;box-sizing:border-box;border:1px solid #7d8fa8;border-radius:3px;background:linear-gradient(to bottom,#c8d8e8,#b8cce0 45%,#9db5cf 50%,#a8c0da 85%,#b8d0e6)"></div>
<div style="position:absolute;left:1252px;top:482px;width:10px;height:3px;background:#fff;border:1px solid #3c4656;border-radius:1.5px"></div>
<div style="position:absolute;left:1276px;top:474px;width:31px;height:17px;box-sizing:border-box;border:1px solid #7d8fa8;border-radius:3px;background:linear-gradient(to bottom,#c8d8e8,#b8cce0 45%,#9db5cf 50%,#a8c0da 85%,#b8d0e6)"></div>
<div style="position:absolute;left:1286px;top:477px;width:7px;height:5px;border:2px solid #f4f4f4;outline:1px solid #3c4656;box-shadow:inset 0 0 0 1px #3c4656;border-radius:1px"></div>
<div style="position:absolute;left:1310px;top:474px;width:32px;height:17px;box-sizing:border-box;border:1px solid #8a3a30;border-radius:3px;background:linear-gradient(to bottom,#e8a598,#d88878 45%,#b8402c 50%,#c85a48 85%,#d87a68)"></div>
<svg style="position:absolute;left:1319px;top:476px" width="13" height="12"><path d="M2.5 2.5 L10.5 9.5 M10.5 2.5 L2.5 9.5" stroke="#3c4656" stroke-width="4.5" stroke-linecap="round"/><path d="M2.5 2.5 L10.5 9.5 M10.5 2.5 L2.5 9.5" stroke="#f4f4f4" stroke-width="2.5" stroke-linecap="round"/></svg>
<div style="position:absolute;left:10px;top:495px;width:1334px;height:331px;box-sizing:border-box;background:#fff;border-top:2px solid #646464;border-left:2px solid #646464;border-right:1px solid #f0f0f0;border-bottom:1px solid #f0f0f0"></div>
<div style="position:absolute;left:12px;top:438px;width:1331px;height:16px;background:#f0f0f0"></div>
<div style="position:absolute;left:669px;top:438px;width:17px;height:15px;background:#cdcdcd"></div>
<div style="position:absolute;left:12px;top:454px;width:1331px;height:1px;background:#e3e3e3"></div>
<svg style="position:absolute;left:14px;top:440px" width="12" height="12"><path d="M8 2 L4 6 L8 10" stroke="#606060" stroke-width="1.6" fill="none"/></svg>
<svg style="position:absolute;left:1328px;top:440px" width="12" height="12"><path d="M4 2 L8 6 L4 10" stroke="#606060" stroke-width="1.6" fill="none"/></svg>
<svg style="position:absolute;left:0;top:0" width="1600" height="860" shape-rendering="crispEdges"><line x1="200.5" y1="158" x2="200.5" y2="400" stroke="#00ff00" stroke-width="1" stroke-dasharray="3 3"/><line x1="322.5" y1="158" x2="322.5" y2="400" stroke="#00ff00" stroke-width="1" stroke-dasharray="3 3"/><line x1="444.5" y1="158" x2="444.5" y2="400" stroke="#00ff00" stroke-width="1" stroke-dasharray="3 3"/><line x1="566.5" y1="158" x2="566.5" y2="400" stroke="#00ff00" stroke-width="1" stroke-dasharray="3 3"/><line x1="688.5" y1="158" x2="688.5" y2="400" stroke="#00ff00" stroke-width="1" stroke-dasharray="3 3"/><line x1="810.5" y1="158" x2="810.5" y2="400" stroke="#00ff00" stroke-width="1" stroke-dasharray="3 3"/><line x1="932.5" y1="158" x2="932.5" y2="400" stroke="#00ff00" stroke-width="1" stroke-dasharray="3 3"/><line x1="1054.5" y1="158" x2="1054.5" y2="400" stroke="#00ff00" stroke-width="1" stroke-dasharray="3 3"/><line x1="1176.5" y1="158" x2="1176.5" y2="400" stroke="#00ff00" stroke-width="1" stroke-dasharray="3 3"/><line x1="78" y1="182.5" x2="1298" y2="182.5" stroke="#00ff00" stroke-width="1" stroke-dasharray="3 3"/><line x1="78" y1="206.5" x2="1298" y2="206.5" stroke="#00ff00" stroke-width="1" stroke-dasharray="3 3"/><line x1="78" y1="230.5" x2="1298" y2="230.5" stroke="#00ff00" stroke-width="1" stroke-dasharray="3 3"/><line x1="78" y1="254.5" x2="1298" y2="254.5" stroke="#00ff00" stroke-width="1" stroke-dasharray="3 3"/><line x1="78" y1="279.5" x2="1298" y2="279.5" stroke="#00ff00" stroke-width="1" stroke-dasharray="3 3"/><line x1="78" y1="303.5" x2="1298" y2="303.5" stroke="#00ff00" stroke-width="1" stroke-dasharray="3 3"/><line x1="78" y1="327.5" x2="1298" y2="327.5" stroke="#00ff00" stroke-width="1" stroke-dasharray="3 3"/><line x1="78" y1="351.5" x2="1298" y2="351.5" stroke="#00ff00" stroke-width="1" stroke-dasharray="3 3"/><line x1="78" y1="375.5" x2="1298" y2="375.5" stroke="#00ff00" stroke-width="1" stroke-dasharray="3 3"/><rect x="78.5" y="158.5" width="1220" height="242" fill="none" stroke="#00ff00" stroke-width="1"/><path d="M78 316.5 h5 M80.5 314 v5 M82 312.5 h5 M84.5 310 v5 M86 308.5 h5 M88.5 306 v5 M90 304.5 h5 M92.5 302 v5 M94 300.5 h5 M96.5 298 v5 M98 296.5 h5 M100.5 294 v5 M102 292.5 h5 M104.5 290 v5 M106 288.5 h5 M108.5 286 v5 M110 284.5 h5 M112.5 282 v5 M114 279.5 h5 M116.5 277 v5 M118 275.5 h5 M120.5 273 v5 M122 271.5 h5 M124.5 269 v5 M126 267.5 h5 M128.5 265 v5 M130 263.5 h5 M132.5 261 v5 M134 259.5 h5 M136.5 257 v5 M138 254.5 h5 M140.5 252 v5 M142 250.5 h5 M144.5 248 v5 M146 247.5 h5 M148.5 245 v5 M150 243.5 h5 M152.5 241 v5 M154 239.5 h5 M156.5 237 v5 M158 235.5 h5 M160.5 233 v5 M162 232.5 h5 M164.5 230 v5 M165 228.5 h5 M167.5 226 v5 M169 225.5 h5 M171.5 223 v5 M173 222.5 h5 M175.5 220 v5 M177 219.5 h5 M179.5 217 v5 M181 216.5 h5 M183.5 214 v5 M185 213.5 h5 M187.5 211 v5 M189 210.5 h5 M191.5 208 v5 M193 208.5 h5 M195.5 206 v5 M197 206.5 h5 M199.5 204 v5 M201 204.5 h5 M203.5 202 v5 M205 202.5 h5 M207.5 200 v5 M209 200.5 h5 M211.5 198 v5 M213 199.5 h5 M215.5 197 v5 M217 197.5 h5 M219.5 195 v5 M221 196.5 h5 M223.5 194 v5 M225 195.5 h5 M227.5 193 v5 M229 194.5 h5 M231.5 192 v5 M233 194.5 h5 M235.5 192 v5 M237 194.5 h5 M239.5 192 v5 M241 193.5 h5 M243.5 191 v5 M245 194.5 h5 M247.5 192 v5 M249 194.5 h5 M251.5 192 v5 M253 194.5 h5 M255.5 192 v5 M257 195.5 h5 M259.5 193 v5 M261 196.5 h5 M263.5 194 v5 M265 197.5 h5 M267.5 195 v5 M269 199.5 h5 M271.5 197 v5 M273 200.5 h5 M275.5 198 v5 M277 202.5 h5 M279.5 200 v5 M281 204.5 h5 M283.5 202 v5 M285 206.5 h5 M287.5 204 v5 M289 208.5 h5 M291.5 206 v5 M293 210.5 h5 M295.5 208 v5 M297 213.5 h5 M299.5 211 v5 M301 216.5 h5 M303.5 214 v5 M304 219.5 h5 M306.5 217 v5 M308 222.5 h5 M310.5 220 v5 M312 225.5 h5 M314.5 223 v5 M316 228.5 h5 M318.5 226 v5 M320 232.5 h5 M322.5 230 v5 M324 235.5 h5 M326.5 233 v5 M328 239.5 h5 M330.5 237 v5 M332 243.5 h5 M334.5 241 v5 M336 247.5 h5 M338.5 245 v5 M340 250.5 h5 M342.5 248 v5 M344 254.5 h5 M346.5 252 v5 M348 259.5 h5 M350.5 257 v5 M352 263.5 h5 M354.5 261 v5 M356 267.5 h5 M358.5 265 v5 M360 271.5 h5 M362.5 269 v5 M364 275.5 h5 M366.5 273 v5 M368 279.5 h5 M370.5 277 v5 M372 284.5 h5 M374.5 282 v5 M376 288.5 h5 M378.5 286 v5 M380 292.5 h5 M382.5 290 v5 M384 296.5 h5 M386.5 294 v5 M388 300.5 h5 M390.5 298 v5 M392 304.5 h5 M394.5 302 v5 M396 308.5 h5 M398.5 306 v5 M400 312.5 h5 M402.5 310 v5 M404 316.5 h5 M406.5 314 v5 M408 320.5 h5 M410.5 318 v5 M412 324.5 h5 M414.5 322 v5 M416 327.5 h5 M418.5 325 v5 M420 331.5 h5 M422.5 329 v5 M424 334.5 h5 M426.5 332 v5 M428 337.5 h5 M430.5 335 v5 M432 340.5 h5 M434.5 338 v5 M436 343.5 h5 M438.5 341 v5 M440 346.5 h5 M442.5 344 v5 M443 348.5 h5 M445.5 346 v5 M447 351.5 h5 M449.5 349 v5 M451 353.5 h5 M453.5 351 v5 M455 355.5 h5 M457.5 353 v5 M459 357.5 h5 M461.5 355 v5 M463 359.5 h5 M465.5 357 v5 M467 360.5 h5 M469.5 358 v5 M471 362.5 h5 M473.5 360 v5 M475 363.5 h5 M477.5 361 v5 M479 364.5 h5 M481.5 362 v5 M483 364.5 h5 M485.5 362 v5 M487 365.5 h5 M489.5 363 v5 M491 365.5 h5 M493.5 363 v5 M495 365.5 h5 M497.5 363 v5 M499 365.5 h5 M501.5 363 v5 M503 365.5 h5 M505.5 363 v5 M507 364.5 h5 M509.5 362 v5 M511 364.5 h5 M513.5 362 v5 M515 363.5 h5 M517.5 361 v5 M519 362.5 h5 M521.5 360 v5 M523 360.5 h5 M525.5 358 v5 M527 359.5 h5 M529.5 357 v5 M531 357.5 h5 M533.5 355 v5 M535 355.5 h5 M537.5 353 v5 M539 353.5 h5 M541.5 351 v5 M543 351.5 h5 M545.5 349 v5 M547 348.5 h5 M549.5 346 v5 M551 346.5 h5 M553.5 344 v5 M555 343.5 h5 M557.5 341 v5 M559 340.5 h5 M561.5 338 v5 M563 337.5 h5 M565.5 335 v5 M567 334.5 h5 M569.5 332 v5 M571 331.5 h5 M573.5 329 v5 M575 327.5 h5 M577.5 325 v5 M579 324.5 h5 M581.5 322 v5 M582 320.5 h5 M584.5 318 v5 M586 316.5 h5 M588.5 314 v5 M590 312.5 h5 M592.5 310 v5 M594 308.5 h5 M596.5 306 v5 M598 304.5 h5 M600.5 302 v5 M602 300.5 h5 M604.5 298 v5 M606 296.5 h5 M608.5 294 v5 M610 292.5 h5 M612.5 290 v5 M614 288.5 h5 M616.5 286 v5 M618 284.5 h5 M620.5 282 v5 M622 279.5 h5 M624.5 277 v5 M626 275.5 h5 M628.5 273 v5 M630 271.5 h5 M632.5 269 v5 M634 267.5 h5 M636.5 265 v5 M638 263.5 h5 M640.5 261 v5 M642 259.5 h5 M644.5 257 v5 M646 254.5 h5 M648.5 252 v5 M650 250.5 h5 M652.5 248 v5 M654 247.5 h5 M656.5 245 v5 M658 243.5 h5 M660.5 241 v5 M662 239.5 h5 M664.5 237 v5 M666 235.5 h5 M668.5 233 v5 M670 232.5 h5 M672.5 230 v5 M674 228.5 h5 M676.5 226 v5 M678 225.5 h5 M680.5 223 v5 M682 222.5 h5 M684.5 220 v5 M686 219.5 h5 M688.5 217 v5 M690 216.5 h5 M692.5 214 v5 M694 213.5 h5 M696.5 211 v5 M698 210.5 h5 M700.5 208 v5 M702 208.5 h5 M704.5 206 v5 M706 206.5 h5 M708.5 204 v5 M710 204.5 h5 M712.5 202 v5 M714 202.5 h5 M716.5 200 v5 M718 200.5 h5 M720.5 198 v5 M721 199.5 h5 M723.5 197 v5 M725 197.5 h5 M727.5 195 v5 M729 196.5 h5 M731.5 194 v5 M733 195.5 h5 M735.5 193 v5 M737 194.5 h5 M739.5 192 v5 M741 194.5 h5 M743.5 192 v5 M745 194.5 h5 M747.5 192 v5 M749 193.5 h5 M751.5 191 v5 M753 194.5 h5 M755.5 192 v5 M757 194.5 h5 M759.5 192 v5 M761 194.5 h5 M763.5 192 v5 M765 195.5 h5 M767.5 193 v5 M769 196.5 h5 M771.5 194 v5 M773 197.5 h5 M775.5 195 v5 M777 199.5 h5 M779.5 197 v5 M781 200.5 h5 M783.5 198 v5 M785 202.5 h5 M787.5 200 v5 M789 204.5 h5 M791.5 202 v5 M793 206.5 h5 M795.5 204 v5 M797 208.5 h5 M799.5 206 v5 M801 210.5 h5 M803.5 208 v5 M805 213.5 h5 M807.5 211 v5 M809 216.5 h5 M811.5 214 v5 M813 219.5 h5 M815.5 217 v5 M817 222.5 h5 M819.5 220 v5 M821 225.5 h5 M823.5 223 v5 M825 228.5 h5 M827.5 226 v5 M829 232.5 h5 M831.5 230 v5 M833 235.5 h5 M835.5 233 v5 M837 239.5 h5 M839.5 237 v5 M841 243.5 h5 M843.5 241 v5 M845 247.5 h5 M847.5 245 v5 M849 250.5 h5 M851.5 248 v5 M853 254.5 h5 M855.5 252 v5 M857 259.5 h5 M859.5 257 v5 M860 263.5 h5 M862.5 261 v5 M864 267.5 h5 M866.5 265 v5 M868 271.5 h5 M870.5 269 v5 M872 275.5 h5 M874.5 273 v5 M876 279.5 h5 M878.5 277 v5 M880 284.5 h5 M882.5 282 v5 M884 288.5 h5 M886.5 286 v5 M888 292.5 h5 M890.5 290 v5 M892 296.5 h5 M894.5 294 v5 M896 300.5 h5 M898.5 298 v5 M900 304.5 h5 M902.5 302 v5 M904 308.5 h5 M906.5 306 v5 M908 312.5 h5 M910.5 310 v5 M912 316.5 h5 M914.5 314 v5 M916 320.5 h5 M918.5 318 v5 M920 324.5 h5 M922.5 322 v5 M924 327.5 h5 M926.5 325 v5 M928 331.5 h5 M930.5 329 v5 M932 334.5 h5 M934.5 332 v5 M936 337.5 h5 M938.5 335 v5 M940 340.5 h5 M942.5 338 v5 M944 343.5 h5 M946.5 341 v5 M948 346.5 h5 M950.5 344 v5 M952 348.5 h5 M954.5 346 v5 M956 351.5 h5 M958.5 349 v5 M960 353.5 h5 M962.5 351 v5 M964 355.5 h5 M966.5 353 v5 M968 357.5 h5 M970.5 355 v5 M972 359.5 h5 M974.5 357 v5 M976 360.5 h5 M978.5 358 v5 M980 362.5 h5 M982.5 360 v5 M984 363.5 h5 M986.5 361 v5 M988 364.5 h5 M990.5 362 v5 M992 364.5 h5 M994.5 362 v5 M995 365.5 h5 M997.5 363 v5 M999 365.5 h5 M1001.5 363 v5 M1003 365.5 h5 M1005.5 363 v5 M1007 365.5 h5 M1009.5 363 v5 M1011 365.5 h5 M1013.5 363 v5 M1015 364.5 h5 M1017.5 362 v5 M1019 364.5 h5 M1021.5 362 v5 M1023 363.5 h5 M1025.5 361 v5 M1027 362.5 h5 M1029.5 360 v5 M1031 360.5 h5 M1033.5 358 v5 M1035 359.5 h5 M1037.5 357 v5 M1039 357.5 h5 M1041.5 355 v5 M1043 355.5 h5 M1045.5 353 v5 M1047 353.5 h5 M1049.5 351 v5 M1051 351.5 h5 M1053.5 349 v5 M1055 348.5 h5 M1057.5 346 v5 M1059 346.5 h5 M1061.5 344 v5 M1063 343.5 h5 M1065.5 341 v5 M1067 340.5 h5 M1069.5 338 v5 M1071 337.5 h5 M1073.5 335 v5 M1075 334.5 h5 M1077.5 332 v5 M1079 331.5 h5 M1081.5 329 v5 M1083 327.5 h5 M1085.5 325 v5 M1087 324.5 h5 M1089.5 322 v5 M1091 320.5 h5 M1093.5 318 v5 M1095 316.5 h5 M1097.5 314 v5 M1099 312.5 h5 M1101.5 310 v5 M1103 308.5 h5 M1105.5 306 v5 M1107 304.5 h5 M1109.5 302 v5 M1111 300.5 h5 M1113.5 298 v5 M1115 296.5 h5 M1117.5 294 v5 M1119 292.5 h5 M1121.5 290 v5 M1123 288.5 h5 M1125.5 286 v5 M1127 284.5 h5 M1129.5 282 v5 M1131 279.5 h5 M1133.5 277 v5 M1134 275.5 h5 M1136.5 273 v5 M1138 271.5 h5 M1140.5 269 v5 M1142 267.5 h5 M1144.5 265 v5 M1146 263.5 h5 M1148.5 261 v5 M1150 259.5 h5 M1152.5 257 v5 M1154 254.5 h5 M1156.5 252 v5 M1158 250.5 h5 M1160.5 248 v5 M1162 247.5 h5 M1164.5 245 v5 M1166 243.5 h5 M1168.5 241 v5 M1170 239.5 h5 M1172.5 237 v5 M1174 235.5 h5 M1176.5 233 v5 M1178 232.5 h5 M1180.5 230 v5 M1182 228.5 h5 M1184.5 226 v5 M1186 225.5 h5 M1188.5 223 v5 M1190 222.5 h5 M1192.5 220 v5 M1194 219.5 h5 M1196.5 217 v5 M1198 216.5 h5 M1200.5 214 v5 M1202 213.5 h5 M1204.5 211 v5 M1206 210.5 h5 M1208.5 208 v5 M1210 208.5 h5 M1212.5 206 v5 M1214 206.5 h5 M1216.5 204 v5 M1218 204.5 h5 M1220.5 202 v5 M1222 202.5 h5 M1224.5 200 v5 M1226 200.5 h5 M1228.5 198 v5 M1230 199.5 h5 M1232.5 197 v5 M1234 197.5 h5 M1236.5 195 v5 M1238 196.5 h5 M1240.5 194 v5 M1242 195.5 h5 M1244.5 193 v5 M1246 194.5 h5 M1248.5 192 v5 M1250 194.5 h5 M1252.5 192 v5 M1254 194.5 h5 M1256.5 192 v5 M1258 193.5 h5 M1260.5 191 v5 M1262 194.5 h5 M1264.5 192 v5 M1266 194.5 h5 M1268.5 192 v5 M1270 194.5 h5 M1272.5 192 v5 M1273 195.5 h5 M1275.5 193 v5 M1277 196.5 h5 M1279.5 194 v5 M1281 197.5 h5 M1283.5 195 v5 M1285 199.5 h5 M1287.5 197 v5 M1289 200.5 h5 M1291.5 198 v5 M1293 202.5 h5 M1295.5 200 v5 " stroke="#0000ff" stroke-width="1" fill="none"/><path d="M78.00 315.84 L179.40 218.50 L306.48 218.50 L433.57 340.50 L560.65 340.50 L687.73 218.50 L814.82 218.50 L941.90 340.50 L1068.98 340.50 L1196.07 218.50 L1298.00 218.50" stroke="#ff0000" stroke-width="1.2" fill="none" shape-rendering="auto"/></svg>
<div style="position:absolute;left:43px;top:127.15px;font:bold 14px/14px 'Liberation Sans', sans-serif;color:#0000ff;white-space:pre;letter-spacing:0.569px;">A (V)</div>
<div style="position:absolute;left:311px;top:127.15px;font:bold 14px/14px 'Liberation Sans', sans-serif;color:#0000ff;white-space:pre;letter-spacing:0.703px;">A: Max=</div>
<div style="position:absolute;left:389.5px;top:127.15px;font:bold 14px/14px 'Liberation Sans', sans-serif;color:#0000ff;white-space:pre;letter-spacing:0.203px;">999.9999460</div>
<div style="position:absolute;left:479px;top:127.15px;font:bold 14px/14px 'Liberation Sans', sans-serif;color:#0000ff;white-space:pre;letter-spacing:0.602px;">mV</div>
<div style="position:absolute;left:510.5px;top:127.15px;font:bold 14px/14px 'Liberation Sans', sans-serif;color:#0000ff;white-space:pre;letter-spacing:0.680px;">MIn=</div>
<div style="position:absolute;left:560.8px;top:127.15px;font:bold 14px/14px 'Liberation Sans', sans-serif;color:#0000ff;white-space:pre;letter-spacing:0.232px;">-999.9999995</div>
<div style="position:absolute;left:656px;top:127.15px;font:bold 14px/14px 'Liberation Sans', sans-serif;color:#0000ff;white-space:pre;letter-spacing:0.102px;">mV</div>
<div style="position:absolute;left:686px;top:127.15px;font:bold 14px/14px 'Liberation Sans', sans-serif;color:#0000ff;white-space:pre;letter-spacing:0.706px;">Mean=</div>
<div style="position:absolute;left:817.5px;top:127.15px;font:bold 14px/14px 'Liberation Sans', sans-serif;color:#0000ff;white-space:pre;letter-spacing:0.062px;">0.00</div>
<div style="position:absolute;left:855.5px;top:127.15px;font:bold 14px/14px 'Liberation Sans', sans-serif;color:#0000ff;white-space:pre;letter-spacing:0.305px;">nV</div>
<div style="position:absolute;left:882px;top:127.15px;font:bold 14px/14px 'Liberation Sans', sans-serif;color:#0000ff;white-space:pre;letter-spacing:1.176px;">RMS=</div>
<div style="position:absolute;left:945.5px;top:127.15px;font:bold 14px/14px 'Liberation Sans', sans-serif;color:#0000ff;white-space:pre;letter-spacing:0.079px;">999.99991921</div>
<div style="position:absolute;left:1042px;top:127.15px;font:bold 14px/14px 'Liberation Sans', sans-serif;color:#0000ff;white-space:pre;letter-spacing:1.602px;">mV</div>
<div style="position:absolute;left:78.5px;top:143.65px;font:bold 14px/14px 'Liberation Sans', sans-serif;color:#ff0000;white-space:pre;letter-spacing:0.349px;">-No SINC Interpolation</div>
<div style="position:absolute;left:-925px;width:1000px;text-align:right;top:151.15px;font:bold 14px/14px 'Liberation Sans', sans-serif;color:#0000ff;white-space:pre;">2</div>
<div style="position:absolute;left:-925px;width:1000px;text-align:right;top:175.15px;font:bold 14px/14px 'Liberation Sans', sans-serif;color:#0000ff;white-space:pre;">1.6</div>
<div style="position:absolute;left:-925px;width:1000px;text-align:right;top:199.15px;font:bold 14px/14px 'Liberation Sans', sans-serif;color:#0000ff;white-space:pre;">1.2</div>
<div style="position:absolute;left:-925px;width:1000px;text-align:right;top:223.15px;font:bold 14px/14px 'Liberation Sans', sans-serif;color:#0000ff;white-space:pre;">0.8</div>
<div style="position:absolute;left:-925px;width:1000px;text-align:right;top:247.15px;font:bold 14px/14px 'Liberation Sans', sans-serif;color:#0000ff;white-space:pre;">0.4</div>
<div style="position:absolute;left:-925px;width:1000px;text-align:right;top:272.15px;font:bold 14px/14px 'Liberation Sans', sans-serif;color:#0000ff;white-space:pre;">0</div>
<div style="position:absolute;left:-925px;width:1000px;text-align:right;top:296.15px;font:bold 14px/14px 'Liberation Sans', sans-serif;color:#0000ff;white-space:pre;">-0.4</div>
<div style="position:absolute;left:-925px;width:1000px;text-align:right;top:320.15px;font:bold 14px/14px 'Liberation Sans', sans-serif;color:#0000ff;white-space:pre;">-0.8</div>
<div style="position:absolute;left:-925px;width:1000px;text-align:right;top:344.15px;font:bold 14px/14px 'Liberation Sans', sans-serif;color:#0000ff;white-space:pre;">-1.2</div>
<div style="position:absolute;left:-925px;width:1000px;text-align:right;top:368.15px;font:bold 14px/14px 'Liberation Sans', sans-serif;color:#0000ff;white-space:pre;">-1.6</div>
<div style="position:absolute;left:-925px;width:1000px;text-align:right;top:393.15px;font:bold 14px/14px 'Liberation Sans', sans-serif;color:#0000ff;white-space:pre;">-2</div>
<div style="position:absolute;left:-422px;width:1000px;text-align:center;top:405.15px;font:bold 14px/14px 'Liberation Sans', sans-serif;color:#000;white-space:pre;">0.4999</div>
<div style="position:absolute;left:-300px;width:1000px;text-align:center;top:405.15px;font:bold 14px/14px 'Liberation Sans', sans-serif;color:#000;white-space:pre;">0.49992</div>
<div style="position:absolute;left:-178px;width:1000px;text-align:center;top:405.15px;font:bold 14px/14px 'Liberation Sans', sans-serif;color:#000;white-space:pre;">0.49994</div>
<div style="position:absolute;left:-56px;width:1000px;text-align:center;top:405.15px;font:bold 14px/14px 'Liberation Sans', sans-serif;color:#000;white-space:pre;">0.49996</div>
<div style="position:absolute;left:66px;width:1000px;text-align:center;top:405.15px;font:bold 14px/14px 'Liberation Sans', sans-serif;color:#000;white-space:pre;">0.49998</div>
<div style="position:absolute;left:188px;width:1000px;text-align:center;top:405.15px;font:bold 14px/14px 'Liberation Sans', sans-serif;color:#000;white-space:pre;">0.5</div>
<div style="position:absolute;left:310px;width:1000px;text-align:center;top:405.15px;font:bold 14px/14px 'Liberation Sans', sans-serif;color:#000;white-space:pre;">0.50002</div>
<div style="position:absolute;left:432px;width:1000px;text-align:center;top:405.15px;font:bold 14px/14px 'Liberation Sans', sans-serif;color:#000;white-space:pre;">0.50004</div>
<div style="position:absolute;left:554px;width:1000px;text-align:center;top:405.15px;font:bold 14px/14px 'Liberation Sans', sans-serif;color:#000;white-space:pre;">0.50006</div>
<div style="position:absolute;left:676px;width:1000px;text-align:center;top:405.15px;font:bold 14px/14px 'Liberation Sans', sans-serif;color:#000;white-space:pre;">0.50008</div>
<div style="position:absolute;left:798px;width:1000px;text-align:center;top:405.15px;font:bold 14px/14px 'Liberation Sans', sans-serif;color:#000;white-space:pre;">0.5001</div>
<div style="position:absolute;left:807px;width:1000px;text-align:center;top:416.15px;font:bold 14px/14px 'Liberation Sans', sans-serif;color:#000;white-space:pre;">s</div>
<div style="position:absolute;left:13px;top:419.15px;font:bold 14px/14px 'Liberation Sans', sans-serif;color:#000;white-space:pre;letter-spacing:0.212px;">+04:48:01:453</div>
<div style="position:absolute;left:643.5px;top:419.15px;font:bold 14px/14px 'Liberation Sans', sans-serif;color:#000;white-space:pre;letter-spacing:0.949px;">WAVEFORM</div>
<div style="position:absolute;left:743px;top:418px;width:38px;height:16px;background:#000"></div>
<div style="position:absolute;left:746px;top:419.15px;font:bold 14px/14px 'Liberation Sans', sans-serif;color:#fff;white-space:pre;letter-spacing:0.137px;">SINC</div>
<div style="position:absolute;left:1279px;top:161px;width:19px;height:12px;overflow:hidden"><div style="position:absolute;left:0px;top:-2px;font:bold 16px/16px 'Liberation Sans', sans-serif;color:#ff00ff;letter-spacing:-0.3px;transform:scaleX(1.0);transform-origin:0 0">MI</div><div style="position:absolute;left:0;top:1px;width:19px;height:1px;background:#fff"></div><div style="position:absolute;left:0;top:3px;width:19px;height:1px;background:#fff"></div><div style="position:absolute;left:0;top:5px;width:19px;height:1px;background:#fff"></div></div>
<svg style="position:absolute;left:0;top:0" width="1600" height="860" shape-rendering="crispEdges"><line x1="200.5" y1="529" x2="200.5" y2="787" stroke="#00ff00" stroke-width="1" stroke-dasharray="3 3"/><line x1="322.5" y1="529" x2="322.5" y2="787" stroke="#00ff00" stroke-width="1" stroke-dasharray="3 3"/><line x1="444.5" y1="529" x2="444.5" y2="787" stroke="#00ff00" stroke-width="1" stroke-dasharray="3 3"/><line x1="566.5" y1="529" x2="566.5" y2="787" stroke="#00ff00" stroke-width="1" stroke-dasharray="3 3"/><line x1="688.5" y1="529" x2="688.5" y2="787" stroke="#00ff00" stroke-width="1" stroke-dasharray="3 3"/><line x1="810.5" y1="529" x2="810.5" y2="787" stroke="#00ff00" stroke-width="1" stroke-dasharray="3 3"/><line x1="932.5" y1="529" x2="932.5" y2="787" stroke="#00ff00" stroke-width="1" stroke-dasharray="3 3"/><line x1="1054.5" y1="529" x2="1054.5" y2="787" stroke="#00ff00" stroke-width="1" stroke-dasharray="3 3"/><line x1="1176.5" y1="529" x2="1176.5" y2="787" stroke="#00ff00" stroke-width="1" stroke-dasharray="3 3"/><line x1="78" y1="554.5" x2="1298" y2="554.5" stroke="#00ff00" stroke-width="1" stroke-dasharray="3 3"/><line x1="78" y1="580.5" x2="1298" y2="580.5" stroke="#00ff00" stroke-width="1" stroke-dasharray="3 3"/><line x1="78" y1="606.5" x2="1298" y2="606.5" stroke="#00ff00" stroke-width="1" stroke-dasharray="3 3"/><line x1="78" y1="632.5" x2="1298" y2="632.5" stroke="#00ff00" stroke-width="1" stroke-dasharray="3 3"/><line x1="78" y1="658.5" x2="1298" y2="658.5" stroke="#00ff00" stroke-width="1" stroke-dasharray="3 3"/><line x1="78" y1="683.5" x2="1298" y2="683.5" stroke="#00ff00" stroke-width="1" stroke-dasharray="3 3"/><line x1="78" y1="709.5" x2="1298" y2="709.5" stroke="#00ff00" stroke-width="1" stroke-dasharray="3 3"/><line x1="78" y1="735.5" x2="1298" y2="735.5" stroke="#00ff00" stroke-width="1" stroke-dasharray="3 3"/><line x1="78" y1="761.5" x2="1298" y2="761.5" stroke="#00ff00" stroke-width="1" stroke-dasharray="3 3"/><rect x="78.5" y="529.5" width="1220" height="258" fill="none" stroke="#00ff00" stroke-width="1"/><path d="M689.5 529 V658.5 M688.5 658 H691 M688.5 658 V787 M690.5 658 V787" stroke="#0000ff" stroke-width="1" fill="none"/></svg>
<div style="position:absolute;left:67px;top:498.15px;font:bold 14px/14px 'Liberation Sans', sans-serif;color:#0000ff;white-space:pre;">A</div>
<div style="position:absolute;left:563.5px;top:498.15px;font:bold 14px/14px 'Liberation Sans', sans-serif;color:#0000ff;white-space:pre;letter-spacing:0.298px;">A: Peak Frequency= 12.000000   kHz</div>
<div style="position:absolute;left:-925px;width:1000px;text-align:right;top:522.15px;font:bold 14px/14px 'Liberation Sans', sans-serif;color:#0000ff;white-space:pre;">1</div>
<div style="position:absolute;left:-925px;width:1000px;text-align:right;top:547.15px;font:bold 14px/14px 'Liberation Sans', sans-serif;color:#0000ff;white-space:pre;">0.9</div>
<div style="position:absolute;left:-925px;width:1000px;text-align:right;top:573.15px;font:bold 14px/14px 'Liberation Sans', sans-serif;color:#0000ff;white-space:pre;">0.8</div>
<div style="position:absolute;left:-925px;width:1000px;text-align:right;top:599.15px;font:bold 14px/14px 'Liberation Sans', sans-serif;color:#0000ff;white-space:pre;">0.7</div>
<div style="position:absolute;left:-925px;width:1000px;text-align:right;top:625.15px;font:bold 14px/14px 'Liberation Sans', sans-serif;color:#0000ff;white-space:pre;">0.6</div>
<div style="position:absolute;left:-925px;width:1000px;text-align:right;top:651.15px;font:bold 14px/14px 'Liberation Sans', sans-serif;color:#0000ff;white-space:pre;">0.5</div>
<div style="position:absolute;left:-925px;width:1000px;text-align:right;top:676.15px;font:bold 14px/14px 'Liberation Sans', sans-serif;color:#0000ff;white-space:pre;">0.4</div>
<div style="position:absolute;left:-925px;width:1000px;text-align:right;top:702.15px;font:bold 14px/14px 'Liberation Sans', sans-serif;color:#0000ff;white-space:pre;">0.3</div>
<div style="position:absolute;left:-925px;width:1000px;text-align:right;top:728.15px;font:bold 14px/14px 'Liberation Sans', sans-serif;color:#0000ff;white-space:pre;">0.2</div>
<div style="position:absolute;left:-925px;width:1000px;text-align:right;top:754.15px;font:bold 14px/14px 'Liberation Sans', sans-serif;color:#0000ff;white-space:pre;">0.1</div>
<div style="position:absolute;left:-925px;width:1000px;text-align:right;top:780.15px;font:bold 14px/14px 'Liberation Sans', sans-serif;color:#0000ff;white-space:pre;">0</div>
<div style="position:absolute;left:-422px;width:1000px;text-align:center;top:792.15px;font:bold 14px/14px 'Liberation Sans', sans-serif;color:#000;white-space:pre;">0</div>
<div style="position:absolute;left:-300px;width:1000px;text-align:center;top:792.15px;font:bold 14px/14px 'Liberation Sans', sans-serif;color:#000;white-space:pre;">2.4</div>
<div style="position:absolute;left:-178px;width:1000px;text-align:center;top:792.15px;font:bold 14px/14px 'Liberation Sans', sans-serif;color:#000;white-space:pre;">4.8</div>
<div style="position:absolute;left:-56px;width:1000px;text-align:center;top:792.15px;font:bold 14px/14px 'Liberation Sans', sans-serif;color:#000;white-space:pre;">7.2</div>
<div style="position:absolute;left:66px;width:1000px;text-align:center;top:792.15px;font:bold 14px/14px 'Liberation Sans', sans-serif;color:#000;white-space:pre;">9.6</div>
<div style="position:absolute;left:188px;width:1000px;text-align:center;top:792.15px;font:bold 14px/14px 'Liberation Sans', sans-serif;color:#000;white-space:pre;">12</div>
<div style="position:absolute;left:310px;width:1000px;text-align:center;top:792.15px;font:bold 14px/14px 'Liberation Sans', sans-serif;color:#000;white-space:pre;">14.4</div>
<div style="position:absolute;left:432px;width:1000px;text-align:center;top:792.15px;font:bold 14px/14px 'Liberation Sans', sans-serif;color:#000;white-space:pre;">16.8</div>
<div style="position:absolute;left:554px;width:1000px;text-align:center;top:792.15px;font:bold 14px/14px 'Liberation Sans', sans-serif;color:#000;white-space:pre;">19.2</div>
<div style="position:absolute;left:676px;width:1000px;text-align:center;top:792.15px;font:bold 14px/14px 'Liberation Sans', sans-serif;color:#000;white-space:pre;">21.6</div>
<div style="position:absolute;left:798px;width:1000px;text-align:center;top:792.15px;font:bold 14px/14px 'Liberation Sans', sans-serif;color:#000;white-space:pre;">24</div>
<div style="position:absolute;left:813px;width:1000px;text-align:center;top:804.15px;font:bold 14px/14px 'Liberation Sans', sans-serif;color:#000;white-space:pre;">kHz</div>
<div style="position:absolute;left:13px;top:805px;width:96px;height:16px;background:#000"></div>
<div style="position:absolute;left:14px;top:806.15px;font:bold 14px/14px 'Liberation Sans', sans-serif;color:#fff;white-space:pre;letter-spacing:0.379px;">Zero Padding</div>
<div style="position:absolute;left:120px;top:806.15px;font:bold 14px/14px 'Liberation Sans', sans-serif;color:#000;white-space:pre;letter-spacing:0.318px;">Resolution: 0.732422Hz, 1Hz (real)</div>
<div style="position:absolute;left:547px;top:806.15px;font:bold 14px/14px 'Liberation Sans', sans-serif;color:#000;white-space:pre;letter-spacing:0.696px;">NORMALIZED AMPLITUDE SPECTRUM</div>
<div style="position:absolute;left:1279px;top:533px;width:19px;height:12px;overflow:hidden"><div style="position:absolute;left:0px;top:-2px;font:bold 16px/16px 'Liberation Sans', sans-serif;color:#ff00ff;letter-spacing:-0.3px;transform:scaleX(1.0);transform-origin:0 0">MI</div><div style="position:absolute;left:0;top:1px;width:19px;height:1px;background:#fff"></div><div style="position:absolute;left:0;top:3px;width:19px;height:1px;background:#fff"></div><div style="position:absolute;left:0;top:5px;width:19px;height:1px;background:#fff"></div></div>
<div style="position:absolute;left:1355px;top:184px;width:242px;height:557px;box-shadow:0 0 6px 2px rgba(0,0,0,0.35)"></div>
<div style="position:absolute;left:1355px;top:184px;width:242px;height:557px;background:#f0f0f0;border-left:1px solid #bdbdbd;border-right:1px solid #bdbdbd;box-sizing:border-box"></div>
<div style="position:absolute;left:1356px;top:184px;width:240px;height:25px;background:#fff"></div>
<svg style="position:absolute;left:1358px;top:188px" width="16" height="16" shape-rendering="crispEdges"><rect width="16" height="16" fill="#ffff00"/><path d="M0 4.5 H3.5 V1.5 H7.5 V4.5 H11.5 V1.5 H15.5 V4.5" stroke="#ff0000" fill="none" stroke-width="1.2"/><path d="M0 9.5 H3.5 V6.5 H7.5 V9.5 H11.5 V6.5 H15.5 V9.5" stroke="#00d000" fill="none" stroke-width="1.2"/><path d="M0 15 L3 11 L6 15 L9 11 L12 15 L15 11" stroke="#0000ff" fill="none" stroke-width="1.1" shape-rendering="auto"/></svg>
<div style="position:absolute;left:1379px;top:189.84px;font:normal 12px/12px 'Liberation Sans', sans-serif;color:#a0a0a0;white-space:pre;letter-spacing:-0.293px;">Signal Gener...</div>
<svg style="position:absolute;left:1470px;top:184px" width="127" height="25"><line x1="8" y1="12.5" x2="18" y2="12.5" stroke="#a0a0a0"/><rect x="53.5" y="7.5" width="9" height="9" fill="none" stroke="#e0e0e0"/><path d="M99 7 L109 17 M109 7 L99 17" stroke="#707070" stroke-width="1.1"/></svg>
<div style="position:absolute;left:1360px;top:217px;width:13px;height:13px;box-sizing:border-box;background:#fff;border-top:1px solid #a0a0a0;border-left:1px solid #a0a0a0;border-right:1px solid #fff;border-bottom:1px solid #fff"><div style="position:absolute;inset:0;border-top:1px solid #696969;border-left:1px solid #696969;border-right:1px solid #e3e3e3;border-bottom:1px solid #e3e3e3"></div></div>
<svg style="position:absolute;left:1360px;top:217px" width="13" height="13"><path d="M3 6 L5 9 L10 3" stroke="#000" stroke-width="2" fill="none"/></svg>
<div style="position:absolute;left:1379px;top:218.69px;font:normal 11px/11px 'Liberation Sans', sans-serif;color:#000;white-space:pre;letter-spacing:-0.301px;">Show Editor</div>
<div style="position:absolute;left:1441px;top:213px;width:126px;height:21px;box-sizing:border-box;background:#fff;border-top:1px solid #a0a0a0;border-left:1px solid #a0a0a0;border-right:1px solid #696969;border-bottom:1px solid #c8c8c8;"><div style="position:absolute;inset:0;border-top:1px solid #696969;border-left:1px solid #696969;"></div></div>
<div style="position:absolute;left:1549px;top:215px;width:17px;height:18px;box-sizing:border-box;background:#f0f0f0;border-top:1px solid #fff;border-left:1px solid #fff;border-right:1px solid #696969;border-bottom:1px solid #696969;"><div style="position:absolute;inset:0;border-right:1px solid #a0a0a0;border-bottom:1px solid #a0a0a0;"></div></div>
<svg style="position:absolute;left:1554px;top:222px" width="7" height="4" shape-rendering="crispEdges" fill="#000"><rect x="0" y="0" width="7" height="1"/><rect x="1" y="1" width="5" height="1"/><rect x="2" y="2" width="3" height="1"/><rect x="3" y="3" width="1" height="1"/></svg>
<div style="position:absolute;left:1445px;top:218.69px;font:normal 11px/11px 'Liberation Sans', sans-serif;color:#000;white-space:pre;letter-spacing:-0.191px;">iA = oA, iB = oB</div>
<div style="position:absolute;left:1570px;top:212px;width:24px;height:24px;box-sizing:border-box;background:#f0f0f0;border-top:1px solid #fff;border-left:1px solid #fff;border-right:1px solid #696969;border-bottom:1px solid #696969"><div style="position:absolute;inset:0;border-right:1px solid #a0a0a0;border-bottom:1px solid #a0a0a0"></div></div>
<svg style="position:absolute;left:1576px;top:217px" width="14" height="14"><path d="M2 1 L12 7 L2 13 Z" fill="#ff0000"/></svg>
<div style="position:absolute;left:1358px;top:244.69px;font:normal 11px/11px 'Liberation Sans', sans-serif;color:#8d8d8d;white-space:pre;letter-spacing:-0.215px;">Start OSC after (s)</div>
<div style="position:absolute;left:1450px;top:240px;width:68px;height:19px;box-sizing:border-box;background:#f0f0f0;border-top:1px solid #a0a0a0;border-left:1px solid #a0a0a0;border-right:1px solid #fff;border-bottom:1px solid #fff"><div style="position:absolute;inset:0;border-top:1px solid #696969;border-left:1px solid #696969;border-right:1px solid #e3e3e3;border-bottom:1px solid #e3e3e3"></div></div>
<div style="position:absolute;left:1453px;top:244.19px;font:normal 11px/11px 'Liberation Sans', sans-serif;color:#8d8d8d;white-space:pre;">0</div>
<div style="position:absolute;left:1521px;top:244px;width:13px;height:13px;box-sizing:border-box;background:#f0f0f0;border-top:1px solid #a0a0a0;border-left:1px solid #a0a0a0;border-right:1px solid #fff;border-bottom:1px solid #fff"><div style="position:absolute;inset:0;border-top:1px solid #696969;border-left:1px solid #696969;border-right:1px solid #e3e3e3;border-bottom:1px solid #e3e3e3"></div></div>
<div style="position:absolute;left:1538px;top:244.69px;font:normal 11px/11px 'Liberation Sans', sans-serif;color:#8d8d8d;white-space:pre;letter-spacing:-0.194px;">Echo Only</div>
<div style="position:absolute;left:1357px;top:273px;width:209px;height:35px;box-sizing:border-box;border:1px solid #c8c8c8;box-shadow:inset 1px 1px 0 #fff, 1px 1px 0 #fff"></div>
<div style="position:absolute;left:1364px;top:267px;width:102px;height:12px;background:#f0f0f0"></div>
<div style="position:absolute;left:1366px;top:268.69px;font:normal 11px/11px 'Liberation Sans', sans-serif;color:#000;white-space:pre;letter-spacing:-0.357px;">Sampling Parameters</div>
<div style="position:absolute;left:1363px;top:283px;width:98px;height:19px;box-sizing:border-box;background:#fff;border-top:1px solid #a0a0a0;border-left:1px solid #a0a0a0;border-right:1px solid #696969;border-bottom:1px solid #c8c8c8;"><div style="position:absolute;inset:0;border-top:1px solid #696969;border-left:1px solid #696969;"></div></div>
<div style="position:absolute;left:1443px;top:285px;width:17px;height:16px;box-sizing:border-box;background:#f0f0f0;border-top:1px solid #fff;border-left:1px solid #fff;border-right:1px solid #696969;border-bottom:1px solid #696969;"><div style="position:absolute;inset:0;border-right:1px solid #a0a0a0;border-bottom:1px solid #a0a0a0;"></div></div>
<svg style="position:absolute;left:1448px;top:291px" width="7" height="4" shape-rendering="crispEdges" fill="#000"><rect x="0" y="0" width="7" height="1"/><rect x="1" y="1" width="5" height="1"/><rect x="2" y="2" width="3" height="1"/><rect x="3" y="3" width="1" height="1"/></svg>
<div style="position:absolute;left:1367px;top:287.69px;font:normal 11px/11px 'Liberation Sans', sans-serif;color:#000;white-space:pre;">48kHz</div>
<div style="position:absolute;left:1465px;top:283px;width:43px;height:19px;box-sizing:border-box;background:#fff;border-top:1px solid #a0a0a0;border-left:1px solid #a0a0a0;border-right:1px solid #696969;border-bottom:1px solid #c8c8c8;"><div style="position:absolute;inset:0;border-top:1px solid #696969;border-left:1px solid #696969;"></div></div>
<div style="position:absolute;left:1490px;top:285px;width:17px;height:16px;box-sizing:border-box;background:#f0f0f0;border-top:1px solid #fff;border-left:1px solid #fff;border-right:1px solid #696969;border-bottom:1px solid #696969;"><div style="position:absolute;inset:0;border-right:1px solid #a0a0a0;border-bottom:1px solid #a0a0a0;"></div></div>
<svg style="position:absolute;left:1494px;top:291px" width="7" height="4" shape-rendering="crispEdges" fill="#000"><rect x="0" y="0" width="7" height="1"/><rect x="1" y="1" width="5" height="1"/><rect x="2" y="2" width="3" height="1"/><rect x="3" y="3" width="1" height="1"/></svg>
<div style="position:absolute;left:1469px;top:287.69px;font:normal 11px/11px 'Liberation Sans', sans-serif;color:#000;white-space:pre;">A</div>
<div style="position:absolute;left:1512px;top:283px;width:50px;height:19px;box-sizing:border-box;background:#fff;border-top:1px solid #a0a0a0;border-left:1px solid #a0a0a0;border-right:1px solid #696969;border-bottom:1px solid #c8c8c8;"><div style="position:absolute;inset:0;border-top:1px solid #696969;border-left:1px solid #696969;"></div></div>
<div style="position:absolute;left:1544px;top:285px;width:17px;height:16px;box-sizing:border-box;background:#f0f0f0;border-top:1px solid #fff;border-left:1px solid #fff;border-right:1px solid #696969;border-bottom:1px solid #696969;"><div style="position:absolute;inset:0;border-right:1px solid #a0a0a0;border-bottom:1px solid #a0a0a0;"></div></div>
<svg style="position:absolute;left:1548px;top:291px" width="7" height="4" shape-rendering="crispEdges" fill="#000"><rect x="0" y="0" width="7" height="1"/><rect x="1" y="1" width="5" height="1"/><rect x="2" y="2" width="3" height="1"/><rect x="3" y="3" width="1" height="1"/></svg>
<div style="position:absolute;left:1515px;top:287.69px;font:normal 11px/11px 'Liberation Sans', sans-serif;color:#000;white-space:pre;">32Bit</div>
<div style="position:absolute;left:1570px;top:267px;width:24px;height:23px;box-sizing:border-box;background:#f0f0f0;border-top:1px solid #fff;border-left:1px solid #fff;border-right:1px solid #696969;border-bottom:1px solid #696969"><div style="position:absolute;inset:0;border-right:1px solid #a0a0a0;border-bottom:1px solid #a0a0a0"></div></div>
<svg style="position:absolute;left:1574px;top:270px" width="16" height="16"><rect x="0.5" y="0.5" width="14" height="14" fill="#808000" stroke="#000"/><rect x="3" y="1" width="9" height="6" fill="#000"/><rect x="4" y="2" width="7" height="4" fill="#808000"/><rect x="3" y="9" width="9" height="5" fill="#000"/><rect x="8" y="10" width="2" height="3" fill="#fff"/></svg>
<div style="position:absolute;left:1570px;top:290px;width:24px;height:23px;box-sizing:border-box;background:#f0f0f0;border-top:1px solid #fff;border-left:1px solid #fff;border-right:1px solid #696969;border-bottom:1px solid #696969"><div style="position:absolute;inset:0;border-right:1px solid #a0a0a0;border-bottom:1px solid #a0a0a0"></div></div>
<svg style="position:absolute;left:1574px;top:294px" width="16" height="16"><path d="M1 5.5 H15 M1 8.5 H15 M1 11.5 H15 M1 14.5 H15" stroke="#c8c8c8"/><path d="M4.5 14 V4 L13.5 2 V12" stroke="#ff6060" fill="none"/><rect x="2" y="13" width="3" height="2" fill="#ff6060"/><rect x="11" y="11" width="3" height="2" fill="#ff6060"/></svg>
<div style="position:absolute;left:1366px;top:320px;width:84px;height:20px;box-sizing:border-box;background:#fff;border-top:1px solid #a0a0a0;border-left:1px solid #a0a0a0;border-right:1px solid #696969;border-bottom:1px solid #c8c8c8;"><div style="position:absolute;inset:0;border-top:1px solid #696969;border-left:1px solid #696969;"></div></div>
<div style="position:absolute;left:1432px;top:322px;width:17px;height:17px;box-sizing:border-box;background:#f0f0f0;border-top:1px solid #fff;border-left:1px solid #fff;border-right:1px solid #696969;border-bottom:1px solid #696969;"><div style="position:absolute;inset:0;border-right:1px solid #a0a0a0;border-bottom:1px solid #a0a0a0;"></div></div>
<svg style="position:absolute;left:1436px;top:328px" width="7" height="4" shape-rendering="crispEdges" fill="#000"><rect x="0" y="0" width="7" height="1"/><rect x="1" y="1" width="5" height="1"/><rect x="2" y="2" width="3" height="1"/><rect x="3" y="3" width="1" height="1"/></svg>
<div style="position:absolute;left:1370px;top:325.69px;font:normal 11px/11px 'Liberation Sans', sans-serif;color:#000;white-space:pre;">MultiTones</div>
<div style="position:absolute;left:1463px;top:318px;width:23px;height:23px;box-sizing:border-box;background:#f0f0f0;border-top:1px solid #fff;border-left:1px solid #fff;border-right:1px solid #696969;border-bottom:1px solid #696969"><div style="position:absolute;inset:0;border-right:1px solid #a0a0a0;border-bottom:1px solid #a0a0a0"></div></div>
<div style="position:absolute;left:974.5px;width:1000px;text-align:center;top:325.69px;font:normal 11px/11px 'Liberation Sans', sans-serif;color:#000;white-space:pre;">...</div>
<div style="position:absolute;left:1500px;top:320px;width:83px;height:20px;box-sizing:border-box;background:#f0f0f0;border-top:1px solid #a0a0a0;border-left:1px solid #a0a0a0;border-right:1px solid #696969;border-bottom:1px solid #c8c8c8;"><div style="position:absolute;inset:0;border-top:1px solid #696969;border-left:1px solid #696969;"></div></div>
<div style="position:absolute;left:1565px;top:322px;width:17px;height:17px;box-sizing:border-box;background:#f0f0f0;border-top:1px solid #fff;border-left:1px solid #fff;border-right:1px solid #696969;border-bottom:1px solid #696969;"><div style="position:absolute;inset:0;border-right:1px solid #a0a0a0;border-bottom:1px solid #a0a0a0;"></div></div>
<svg style="position:absolute;left:1570px;top:328px" width="7" height="4" shape-rendering="crispEdges" fill="#a0a0a0"><rect x="0" y="0" width="7" height="1"/><rect x="1" y="1" width="5" height="1"/><rect x="2" y="2" width="3" height="1"/><rect x="3" y="3" width="1" height="1"/></svg>
<div style="position:absolute;left:1503px;top:325.69px;font:normal 11px/11px 'Liberation Sans', sans-serif;color:#8d8d8d;white-space:pre;">MultiTones</div>
<div style="position:absolute;left:1363px;top:384px;width:2px;height:132px;background:#a0a0a0;border-right:1px solid #fff"></div>
<div style="position:absolute;left:1358px;top:509px;width:11px;height:5px;box-sizing:border-box;background:#f0f0f0;border-top:1px solid #fff;border-left:1px solid #fff;border-right:1px solid #696969;border-bottom:1px solid #696969"></div>
<div style="position:absolute;left:1378px;top:384px;width:2px;height:132px;background:#a0a0a0;border-right:1px solid #fff"></div>
<div style="position:absolute;left:1373px;top:383px;width:11px;height:5px;box-sizing:border-box;background:#f0f0f0;border-top:1px solid #fff;border-left:1px solid #fff;border-right:1px solid #696969;border-bottom:1px solid #696969"></div>
<div style="position:absolute;left:1572px;top:384px;width:2px;height:132px;background:#a0a0a0;border-right:1px solid #fff"></div>
<div style="position:absolute;left:1567px;top:383px;width:11px;height:5px;box-sizing:border-box;background:#f0f0f0;border-top:1px solid #fff;border-left:1px solid #fff;border-right:1px solid #696969;border-bottom:1px solid #696969"></div>
<div style="position:absolute;left:1586px;top:384px;width:2px;height:132px;background:#a0a0a0;border-right:1px solid #fff"></div>
<div style="position:absolute;left:1581px;top:509px;width:11px;height:5px;box-sizing:border-box;background:#f0f0f0;border-top:1px solid #fff;border-left:1px solid #fff;border-right:1px solid #696969;border-bottom:1px solid #696969"></div>
<div style="position:absolute;left:1422px;top:376.69px;font:normal 11px/11px 'Liberation Sans', sans-serif;color:#000;white-space:pre;letter-spacing:-0.232px;">Output Frequency (Hz)</div>
<div style="position:absolute;left:1390px;top:394px;width:87px;height:20px;box-sizing:border-box;background:#f0f0f0;border-top:1px solid #a0a0a0;border-left:1px solid #a0a0a0;border-right:1px solid #696969;border-bottom:1px solid #c8c8c8;"><div style="position:absolute;inset:0;border-top:1px solid #696969;border-left:1px solid #696969;"></div></div>
<div style="position:absolute;left:1459px;top:396px;width:17px;height:17px;box-sizing:border-box;background:#f0f0f0;border-top:1px solid #fff;border-left:1px solid #fff;border-right:1px solid #696969;border-bottom:1px solid #696969;"><div style="position:absolute;inset:0;border-right:1px solid #a0a0a0;border-bottom:1px solid #a0a0a0;"></div></div>
<svg style="position:absolute;left:1464px;top:402px" width="7" height="4" shape-rendering="crispEdges" fill="#a0a0a0"><rect x="0" y="0" width="7" height="1"/><rect x="1" y="1" width="5" height="1"/><rect x="2" y="2" width="3" height="1"/><rect x="3" y="3" width="1" height="1"/></svg>
<div style="position:absolute;left:1393px;top:399.69px;font:normal 11px/11px 'Liberation Sans', sans-serif;color:#8d8d8d;white-space:pre;">1000</div>
<div style="position:absolute;left:1479px;top:394px;width:86px;height:20px;box-sizing:border-box;background:#f0f0f0;border-top:1px solid #a0a0a0;border-left:1px solid #a0a0a0;border-right:1px solid #696969;border-bottom:1px solid #c8c8c8;"><div style="position:absolute;inset:0;border-top:1px solid #696969;border-left:1px solid #696969;"></div></div>
<div style="position:absolute;left:1547px;top:396px;width:17px;height:17px;box-sizing:border-box;background:#f0f0f0;border-top:1px solid #fff;border-left:1px solid #fff;border-right:1px solid #696969;border-bottom:1px solid #696969;"><div style="position:absolute;inset:0;border-right:1px solid #a0a0a0;border-bottom:1px solid #a0a0a0;"></div></div>
<svg style="position:absolute;left:1552px;top:402px" width="7" height="4" shape-rendering="crispEdges" fill="#a0a0a0"><rect x="0" y="0" width="7" height="1"/><rect x="1" y="1" width="5" height="1"/><rect x="2" y="2" width="3" height="1"/><rect x="3" y="3" width="1" height="1"/></svg>
<div style="position:absolute;left:1482px;top:399.69px;font:normal 11px/11px 'Liberation Sans', sans-serif;color:#8d8d8d;white-space:pre;">1000</div>
<div style="position:absolute;left:1424px;top:425.69px;font:normal 11px/11px 'Liberation Sans', sans-serif;color:#000;white-space:pre;letter-spacing:-0.309px;">Output Amplitude(Vp)</div>
<div style="position:absolute;left:1390px;top:447px;width:87px;height:19px;box-sizing:border-box;background:#fff;border-top:1px solid #a0a0a0;border-left:1px solid #a0a0a0;border-right:1px solid #696969;border-bottom:1px solid #c8c8c8;"><div style="position:absolute;inset:0;border-top:1px solid #696969;border-left:1px solid #696969;"></div></div>
<div style="position:absolute;left:1459px;top:449px;width:17px;height:16px;box-sizing:border-box;background:#f0f0f0;border-top:1px solid #fff;border-left:1px solid #fff;border-right:1px solid #696969;border-bottom:1px solid #696969;"><div style="position:absolute;inset:0;border-right:1px solid #a0a0a0;border-bottom:1px solid #a0a0a0;"></div></div>
<svg style="position:absolute;left:1464px;top:455px" width="7" height="4" shape-rendering="crispEdges" fill="#000"><rect x="0" y="0" width="7" height="1"/><rect x="1" y="1" width="5" height="1"/><rect x="2" y="2" width="3" height="1"/><rect x="3" y="3" width="1" height="1"/></svg>
<div style="position:absolute;left:1394px;top:451.69px;font:normal 11px/11px 'Liberation Sans', sans-serif;color:#000;white-space:pre;">1</div>
<div style="position:absolute;left:1479px;top:447px;width:86px;height:19px;box-sizing:border-box;background:#f0f0f0;border-top:1px solid #a0a0a0;border-left:1px solid #a0a0a0;border-right:1px solid #696969;border-bottom:1px solid #c8c8c8;"><div style="position:absolute;inset:0;border-top:1px solid #696969;border-left:1px solid #696969;"></div></div>
<div style="position:absolute;left:1547px;top:449px;width:17px;height:16px;box-sizing:border-box;background:#f0f0f0;border-top:1px solid #fff;border-left:1px solid #fff;border-right:1px solid #696969;border-bottom:1px solid #696969;"><div style="position:absolute;inset:0;border-right:1px solid #a0a0a0;border-bottom:1px solid #a0a0a0;"></div></div>
<svg style="position:absolute;left:1552px;top:455px" width="7" height="4" shape-rendering="crispEdges" fill="#a0a0a0"><rect x="0" y="0" width="7" height="1"/><rect x="1" y="1" width="5" height="1"/><rect x="2" y="2" width="3" height="1"/><rect x="3" y="3" width="1" height="1"/></svg>
<div style="position:absolute;left:1482px;top:451.69px;font:normal 11px/11px 'Liberation Sans', sans-serif;color:#8d8d8d;white-space:pre;">1</div>
<div style="position:absolute;left:1394px;top:477.69px;font:normal 11px/11px 'Liberation Sans', sans-serif;color:#8d8d8d;white-space:pre;letter-spacing:-0.179px;">Output Phase Difference (Degree)</div>
<div style="position:absolute;left:1438px;top:497px;width:73px;height:20px;box-sizing:border-box;background:#f0f0f0;border-top:1px solid #a0a0a0;border-left:1px solid #a0a0a0;border-right:1px solid #696969;border-bottom:1px solid #c8c8c8;"><div style="position:absolute;inset:0;border-top:1px solid #696969;border-left:1px solid #696969;"></div></div>
<div style="position:absolute;left:1493px;top:499px;width:17px;height:17px;box-sizing:border-box;background:#f0f0f0;border-top:1px solid #fff;border-left:1px solid #fff;border-right:1px solid #696969;border-bottom:1px solid #696969;"><div style="position:absolute;inset:0;border-right:1px solid #a0a0a0;border-bottom:1px solid #a0a0a0;"></div></div>
<svg style="position:absolute;left:1498px;top:506px" width="7" height="4" shape-rendering="crispEdges" fill="#a0a0a0"><rect x="0" y="0" width="7" height="1"/><rect x="1" y="1" width="5" height="1"/><rect x="2" y="2" width="3" height="1"/><rect x="3" y="3" width="1" height="1"/></svg>
<div style="position:absolute;left:1441px;top:502.69px;font:normal 11px/11px 'Liberation Sans', sans-serif;color:#8d8d8d;white-space:pre;">0</div>
<div style="position:absolute;left:1358px;top:521.69px;font:normal 11px/11px 'Liberation Sans', sans-serif;color:#000;white-space:pre;letter-spacing:-0.402px;">0.0dBFS</div>
<div style="position:absolute;left:1413px;top:527px;width:120px;height:2px;background:#a0a0a0;border-bottom:1px solid #fff"></div>
<div style="position:absolute;left:1472px;top:521px;width:5px;height:11px;box-sizing:border-box;background:#f0f0f0;border-top:1px solid #fff;border-left:1px solid #fff;border-right:1px solid #696969;border-bottom:1px solid #696969"></div>
<div style="position:absolute;left:1547px;top:521.69px;font:normal 11px/11px 'Liberation Sans', sans-serif;color:#8d8d8d;white-space:pre;letter-spacing:-0.402px;">0.0dBFS</div>
<div style="position:absolute;left:1358px;top:541px;width:236px;height:45px;box-sizing:border-box;border:1px solid #c8c8c8;box-shadow:inset 1px 1px 0 #fff, 1px 1px 0 #fff"></div>
<div style="position:absolute;left:1364px;top:546px;width:13px;height:13px;box-sizing:border-box;background:#fff;border-top:1px solid #a0a0a0;border-left:1px solid #a0a0a0;border-right:1px solid #fff;border-bottom:1px solid #fff"><div style="position:absolute;inset:0;border-top:1px solid #696969;border-left:1px solid #696969;border-right:1px solid #e3e3e3;border-bottom:1px solid #e3e3e3"></div></div>
<div style="position:absolute;left:1382px;top:547.69px;font:normal 11px/11px 'Liberation Sans', sans-serif;color:#000;white-space:pre;">Mask</div>
<div style="position:absolute;left:1427px;top:545px;width:14px;height:15px;box-sizing:border-box;background:#f0f0f0;border-top:1px solid #fff;border-left:1px solid #fff;border-right:1px solid #696969;border-bottom:1px solid #696969"><div style="position:absolute;inset:0;border-right:1px solid #a0a0a0;border-bottom:1px solid #a0a0a0"></div></div>
<div style="position:absolute;left:934px;width:1000px;text-align:center;top:548.53px;font:normal 10px/10px 'Liberation Sans', sans-serif;color:#8d8d8d;white-space:pre;">...</div>
<div style="position:absolute;left:1463px;top:547.69px;font:normal 11px/11px 'Liberation Sans', sans-serif;color:#8d8d8d;white-space:pre;">On (s)</div>
<div style="position:absolute;left:1538px;top:547.69px;font:normal 11px/11px 'Liberation Sans', sans-serif;color:#8d8d8d;white-space:pre;">Off (s)</div>
<div style="position:absolute;left:1364px;top:566px;width:13px;height:13px;box-sizing:border-box;background:#f0f0f0;border-top:1px solid #a0a0a0;border-left:1px solid #a0a0a0;border-right:1px solid #fff;border-bottom:1px solid #fff"><div style="position:absolute;inset:0;border-top:1px solid #696969;border-left:1px solid #696969;border-right:1px solid #e3e3e3;border-bottom:1px solid #e3e3e3"></div></div>
<svg style="position:absolute;left:1364px;top:566px" width="13" height="13"><path d="M3 6 L5 9 L10 3" stroke="#a0a0a0" stroke-width="2" fill="none"/></svg>
<div style="position:absolute;left:1382px;top:567.69px;font:normal 11px/11px 'Liberation Sans', sans-serif;color:#8d8d8d;white-space:pre;letter-spacing:-0.148px;">Phase Lock</div>
<div style="position:absolute;left:1450px;top:563px;width:65px;height:20px;box-sizing:border-box;background:#f0f0f0;border-top:1px solid #a0a0a0;border-left:1px solid #a0a0a0;border-right:1px solid #fff;border-bottom:1px solid #fff"><div style="position:absolute;inset:0;border-top:1px solid #696969;border-left:1px solid #696969;border-right:1px solid #e3e3e3;border-bottom:1px solid #e3e3e3"></div></div>
<div style="position:absolute;left:1453px;top:567.69px;font:normal 11px/11px 'Liberation Sans', sans-serif;color:#8d8d8d;white-space:pre;">1</div>
<div style="position:absolute;left:1523px;top:563px;width:65px;height:20px;box-sizing:border-box;background:#f0f0f0;border-top:1px solid #a0a0a0;border-left:1px solid #a0a0a0;border-right:1px solid #fff;border-bottom:1px solid #fff"><div style="position:absolute;inset:0;border-top:1px solid #696969;border-left:1px solid #696969;border-right:1px solid #e3e3e3;border-bottom:1px solid #e3e3e3"></div></div>
<div style="position:absolute;left:1526px;top:567.69px;font:normal 11px/11px 'Liberation Sans', sans-serif;color:#8d8d8d;white-space:pre;">0</div>
<div style="position:absolute;left:1358px;top:592px;width:236px;height:44px;box-sizing:border-box;border:1px solid #c8c8c8;box-shadow:inset 1px 1px 0 #fff, 1px 1px 0 #fff"></div>
<div style="position:absolute;left:1364px;top:607px;width:13px;height:13px;box-sizing:border-box;background:#fff;border-top:1px solid #a0a0a0;border-left:1px solid #a0a0a0;border-right:1px solid #fff;border-bottom:1px solid #fff"><div style="position:absolute;inset:0;border-top:1px solid #696969;border-left:1px solid #696969;border-right:1px solid #e3e3e3;border-bottom:1px solid #e3e3e3"></div></div>
<div style="position:absolute;left:1382px;top:608.69px;font:normal 11px/11px 'Liberation Sans', sans-serif;color:#000;white-space:pre;">Fade</div>
<div style="position:absolute;left:1463px;top:597.69px;font:normal 11px/11px 'Liberation Sans', sans-serif;color:#8d8d8d;white-space:pre;">In (s)</div>
<div style="position:absolute;left:1538px;top:597.69px;font:normal 11px/11px 'Liberation Sans', sans-serif;color:#8d8d8d;white-space:pre;">Out (s)</div>
<div style="position:absolute;left:1450px;top:613px;width:65px;height:21px;box-sizing:border-box;background:#f0f0f0;border-top:1px solid #a0a0a0;border-left:1px solid #a0a0a0;border-right:1px solid #fff;border-bottom:1px solid #fff"><div style="position:absolute;inset:0;border-top:1px solid #696969;border-left:1px solid #696969;border-right:1px solid #e3e3e3;border-bottom:1px solid #e3e3e3"></div></div>
<div style="position:absolute;left:1453px;top:618.19px;font:normal 11px/11px 'Liberation Sans', sans-serif;color:#8d8d8d;white-space:pre;">0.01</div>
<div style="position:absolute;left:1523px;top:613px;width:65px;height:21px;box-sizing:border-box;background:#f0f0f0;border-top:1px solid #a0a0a0;border-left:1px solid #a0a0a0;border-right:1px solid #fff;border-bottom:1px solid #fff"><div style="position:absolute;inset:0;border-top:1px solid #696969;border-left:1px solid #696969;border-right:1px solid #e3e3e3;border-bottom:1px solid #e3e3e3"></div></div>
<div style="position:absolute;left:1526px;top:618.19px;font:normal 11px/11px 'Liberation Sans', sans-serif;color:#8d8d8d;white-space:pre;">0.01</div>
<div style="position:absolute;left:1358px;top:643px;width:236px;height:45px;box-sizing:border-box;border:1px solid #c8c8c8;box-shadow:inset 1px 1px 0 #fff, 1px 1px 0 #fff"></div>
<div style="position:absolute;left:1360px;top:646.69px;font:normal 11px/11px 'Liberation Sans', sans-serif;color:#000;white-space:pre;letter-spacing:0.017px;">Modulation</div>
<div style="position:absolute;left:1433px;top:646.69px;font:normal 11px/11px 'Liberation Sans', sans-serif;color:#8d8d8d;white-space:pre;letter-spacing:-0.371px;">Carrier (Hz)</div>
<div style="position:absolute;left:1508px;top:646.69px;font:normal 11px/11px 'Liberation Sans', sans-serif;color:#8d8d8d;white-space:pre;letter-spacing:-0.328px;">Mod. Index (%)</div>
<div style="position:absolute;left:1360px;top:664px;width:57px;height:20px;box-sizing:border-box;background:#fff;border-top:1px solid #a0a0a0;border-left:1px solid #a0a0a0;border-right:1px solid #696969;border-bottom:1px solid #c8c8c8;"><div style="position:absolute;inset:0;border-top:1px solid #696969;border-left:1px solid #696969;"></div></div>
<div style="position:absolute;left:1399px;top:666px;width:17px;height:17px;box-sizing:border-box;background:#f0f0f0;border-top:1px solid #fff;border-left:1px solid #fff;border-right:1px solid #696969;border-bottom:1px solid #696969;"><div style="position:absolute;inset:0;border-right:1px solid #a0a0a0;border-bottom:1px solid #a0a0a0;"></div></div>
<svg style="position:absolute;left:1404px;top:672px" width="7" height="4" shape-rendering="crispEdges" fill="#000"><rect x="0" y="0" width="7" height="1"/><rect x="1" y="1" width="5" height="1"/><rect x="2" y="2" width="3" height="1"/><rect x="3" y="3" width="1" height="1"/></svg>
<div style="position:absolute;left:1364px;top:669.69px;font:normal 11px/11px 'Liberation Sans', sans-serif;color:#000;white-space:pre;">NIL</div>
<div style="position:absolute;left:1433px;top:665px;width:64px;height:19px;box-sizing:border-box;background:#f0f0f0;border-top:1px solid #a0a0a0;border-left:1px solid #a0a0a0;border-right:1px solid #fff;border-bottom:1px solid #fff"><div style="position:absolute;inset:0;border-top:1px solid #696969;border-left:1px solid #696969;border-right:1px solid #e3e3e3;border-bottom:1px solid #e3e3e3"></div></div>
<div style="position:absolute;left:1436px;top:669.19px;font:normal 11px/11px 'Liberation Sans', sans-serif;color:#8d8d8d;white-space:pre;">0</div>
<div style="position:absolute;left:1514px;top:665px;width:65px;height:19px;box-sizing:border-box;background:#f0f0f0;border-top:1px solid #a0a0a0;border-left:1px solid #a0a0a0;border-right:1px solid #fff;border-bottom:1px solid #fff"><div style="position:absolute;inset:0;border-top:1px solid #696969;border-left:1px solid #696969;border-right:1px solid #e3e3e3;border-bottom:1px solid #e3e3e3"></div></div>
<div style="position:absolute;left:1517px;top:669.19px;font:normal 11px/11px 'Liberation Sans', sans-serif;color:#8d8d8d;white-space:pre;">0</div>
<div style="position:absolute;left:1357px;top:698.69px;font:normal 11px/11px 'Liberation Sans', sans-serif;color:#000;white-space:pre;letter-spacing:-0.289px;">Duration (s)</div>
<div style="position:absolute;left:1421px;top:695px;width:65px;height:20px;box-sizing:border-box;background:#f0f0f0;border-top:1px solid #a0a0a0;border-left:1px solid #a0a0a0;border-right:1px solid #fff;border-bottom:1px solid #fff"><div style="position:absolute;inset:0;border-top:1px solid #696969;border-left:1px solid #696969;border-right:1px solid #e3e3e3;border-bottom:1px solid #e3e3e3"></div></div>
<div style="position:absolute;left:1424px;top:699.69px;font:normal 11px/11px 'Liberation Sans', sans-serif;color:#8d8d8d;white-space:pre;">1</div>
<div style="position:absolute;left:1494px;top:698px;width:13px;height:13px;box-sizing:border-box;background:#fff;border-top:1px solid #a0a0a0;border-left:1px solid #a0a0a0;border-right:1px solid #fff;border-bottom:1px solid #fff"><div style="position:absolute;inset:0;border-top:1px solid #696969;border-left:1px solid #696969;border-right:1px solid #e3e3e3;border-bottom:1px solid #e3e3e3"></div></div>
<svg style="position:absolute;left:1494px;top:698px" width="13" height="13"><path d="M3 6 L5 9 L10 3" stroke="#000" stroke-width="2" fill="none"/></svg>
<div style="position:absolute;left:1512px;top:699.69px;font:normal 11px/11px 'Liberation Sans', sans-serif;color:#000;white-space:pre;">Loop</div>
<div style="position:absolute;left:1550px;top:698px;width:13px;height:13px;box-sizing:border-box;background:#f0f0f0;border-top:1px solid #a0a0a0;border-left:1px solid #a0a0a0;border-right:1px solid #fff;border-bottom:1px solid #fff"><div style="position:absolute;inset:0;border-top:1px solid #696969;border-left:1px solid #696969;border-right:1px solid #e3e3e3;border-bottom:1px solid #e3e3e3"></div></div>
<div style="position:absolute;left:1568px;top:699.69px;font:normal 11px/11px 'Liberation Sans', sans-serif;color:#8d8d8d;white-space:pre;">DDS</div>
<div style="position:absolute;left:1358px;top:722px;width:13px;height:13px;box-sizing:border-box;background:#fff;border-top:1px solid #a0a0a0;border-left:1px solid #a0a0a0;border-right:1px solid #fff;border-bottom:1px solid #fff"><div style="position:absolute;inset:0;border-top:1px solid #696969;border-left:1px solid #696969;border-right:1px solid #e3e3e3;border-bottom:1px solid #e3e3e3"></div></div>
<div style="position:absolute;left:1375px;top:723.69px;font:normal 11px/11px 'Liberation Sans', sans-serif;color:#000;white-space:pre;">Sweep</div>
<svg style="position:absolute;left:1433px;top:721px" width="14" height="14"><circle cx="7" cy="7" r="5.5" fill="#f0f0f0" stroke="#c0c0c0"/><path d="M3 10 A5.5 5.5 0 0 1 10 2.5" stroke="#808080" fill="none"/></svg>
<div style="position:absolute;left:1451px;top:723.69px;font:normal 11px/11px 'Liberation Sans', sans-serif;color:#8d8d8d;white-space:pre;">Frequency</div>
<svg style="position:absolute;left:1514px;top:721px" width="14" height="14"><circle cx="7" cy="7" r="5.5" fill="#f0f0f0" stroke="#c0c0c0"/><path d="M3 10 A5.5 5.5 0 0 1 10 2.5" stroke="#808080" fill="none"/><circle cx="7" cy="7" r="2" fill="#909090"/></svg>
<div style="position:absolute;left:1532px;top:723.69px;font:normal 11px/11px 'Liberation Sans', sans-serif;color:#8d8d8d;white-space:pre;">Amplitude</div>
<div style="position:absolute;left:0px;top:835px;width:1600px;height:25px;background:#f0f0f0"></div>
<div style="position:absolute;left:0px;top:835px;width:1600px;height:2px;background:#fff"></div>
<div style="position:absolute;left:0px;top:837px;width:2px;height:22px;background:#000"></div>
<div style="position:absolute;left:2px;top:837px;width:3px;height:22px;background:#a0a0a0"></div>
<div style="position:absolute;left:5px;top:837px;width:2px;height:22px;background:#000"></div>
<div style="position:absolute;left:18px;top:843.00px;font:bold 13px/13px 'Liberation Sans', sans-serif;color:#000;white-space:pre;">F</div>
<div style="position:absolute;left:30px;top:837px;width:126px;height:22px;box-sizing:border-box;background:#fff;border-top:1px solid #a0a0a0;border-left:1px solid #a0a0a0;border-right:1px solid #696969;border-bottom:1px solid #c8c8c8;"><div style="position:absolute;inset:0;border-top:1px solid #696969;border-left:1px solid #696969;"></div></div>
<div style="position:absolute;left:138px;top:839px;width:17px;height:19px;box-sizing:border-box;background:#f0f0f0;border-top:1px solid #fff;border-left:1px solid #fff;border-right:1px solid #696969;border-bottom:1px solid #696969;"><div style="position:absolute;inset:0;border-right:1px solid #a0a0a0;border-bottom:1px solid #a0a0a0;"></div></div>
<svg style="position:absolute;left:142px;top:846px" width="7" height="4" shape-rendering="crispEdges" fill="#000"><rect x="0" y="0" width="7" height="1"/><rect x="1" y="1" width="5" height="1"/><rect x="2" y="2" width="3" height="1"/><rect x="3" y="3" width="1" height="1"/></svg>
<div style="position:absolute;left:33px;top:843.00px;font:bold 13px/13px 'Liberation Sans', sans-serif;color:#000;white-space:pre;">Auto</div>
<div style="position:absolute;left:158px;top:837px;width:99px;height:22px;box-sizing:border-box;background:#fff;border-top:1px solid #a0a0a0;border-left:1px solid #a0a0a0;border-right:1px solid #696969;border-bottom:1px solid #c8c8c8;"><div style="position:absolute;inset:0;border-top:1px solid #696969;border-left:1px solid #696969;"></div></div>
<div style="position:absolute;left:239px;top:839px;width:17px;height:19px;box-sizing:border-box;background:#f0f0f0;border-top:1px solid #fff;border-left:1px solid #fff;border-right:1px solid #696969;border-bottom:1px solid #696969;"><div style="position:absolute;inset:0;border-right:1px solid #a0a0a0;border-bottom:1px solid #a0a0a0;"></div></div>
<svg style="position:absolute;left:244px;top:846px" width="7" height="4" shape-rendering="crispEdges" fill="#000"><rect x="0" y="0" width="7" height="1"/><rect x="1" y="1" width="5" height="1"/><rect x="2" y="2" width="3" height="1"/><rect x="3" y="3" width="1" height="1"/></svg>
<div style="position:absolute;left:161px;top:843.00px;font:bold 13px/13px 'Liberation Sans', sans-serif;color:#000;white-space:pre;">×1</div>
<div style="position:absolute;left:263px;top:843.00px;font:bold 13px/13px 'Liberation Sans', sans-serif;color:#0000ff;white-space:pre;">A</div>
<div style="position:absolute;left:276px;top:837px;width:127px;height:22px;box-sizing:border-box;background:#fff;border-top:1px solid #a0a0a0;border-left:1px solid #a0a0a0;border-right:1px solid #696969;border-bottom:1px solid #c8c8c8;"><div style="position:absolute;inset:0;border-top:1px solid #696969;border-left:1px solid #696969;"></div></div>
<div style="position:absolute;left:385px;top:839px;width:17px;height:19px;box-sizing:border-box;background:#f0f0f0;border-top:1px solid #fff;border-left:1px solid #fff;border-right:1px solid #696969;border-bottom:1px solid #696969;"><div style="position:absolute;inset:0;border-right:1px solid #a0a0a0;border-bottom:1px solid #a0a0a0;"></div></div>
<svg style="position:absolute;left:390px;top:846px" width="7" height="4" shape-rendering="crispEdges" fill="#000"><rect x="0" y="0" width="7" height="1"/><rect x="1" y="1" width="5" height="1"/><rect x="2" y="2" width="3" height="1"/><rect x="3" y="3" width="1" height="1"/></svg>
<div style="position:absolute;left:279px;top:843.00px;font:bold 13px/13px 'Liberation Sans', sans-serif;color:#0000ff;white-space:pre;">1</div>
<div style="position:absolute;left:405px;top:837px;width:90px;height:22px;box-sizing:border-box;background:#fff;border-top:1px solid #a0a0a0;border-left:1px solid #a0a0a0;border-right:1px solid #696969;border-bottom:1px solid #c8c8c8;"><div style="position:absolute;inset:0;border-top:1px solid #696969;border-left:1px solid #696969;"></div></div>
<div style="position:absolute;left:477px;top:839px;width:17px;height:19px;box-sizing:border-box;background:#f0f0f0;border-top:1px solid #fff;border-left:1px solid #fff;border-right:1px solid #696969;border-bottom:1px solid #696969;"><div style="position:absolute;inset:0;border-right:1px solid #a0a0a0;border-bottom:1px solid #a0a0a0;"></div></div>
<svg style="position:absolute;left:482px;top:846px" width="7" height="4" shape-rendering="crispEdges" fill="#000"><rect x="0" y="0" width="7" height="1"/><rect x="1" y="1" width="5" height="1"/><rect x="2" y="2" width="3" height="1"/><rect x="3" y="3" width="1" height="1"/></svg>
<div style="position:absolute;left:408px;top:843.00px;font:bold 13px/13px 'Liberation Sans', sans-serif;color:#0000ff;white-space:pre;">Off</div>
<div style="position:absolute;left:502px;top:843.00px;font:bold 13px/13px 'Liberation Sans', sans-serif;color:#000;white-space:pre;">M</div>
<div style="position:absolute;left:518px;top:837px;width:255px;height:22px;box-sizing:border-box;background:#fff;border-top:1px solid #a0a0a0;border-left:1px solid #a0a0a0;border-right:1px solid #696969;border-bottom:1px solid #c8c8c8;"><div style="position:absolute;inset:0;border-top:1px solid #696969;border-left:1px solid #696969;"></div></div>
<div style="position:absolute;left:755px;top:839px;width:17px;height:19px;box-sizing:border-box;background:#f0f0f0;border-top:1px solid #fff;border-left:1px solid #fff;border-right:1px solid #696969;border-bottom:1px solid #696969;"><div style="position:absolute;inset:0;border-right:1px solid #a0a0a0;border-bottom:1px solid #a0a0a0;"></div></div>
<svg style="position:absolute;left:760px;top:846px" width="7" height="4" shape-rendering="crispEdges" fill="#000"><rect x="0" y="0" width="7" height="1"/><rect x="1" y="1" width="5" height="1"/><rect x="2" y="2" width="3" height="1"/><rect x="3" y="3" width="1" height="1"/></svg>
<div style="position:absolute;left:521px;top:843.00px;font:bold 13px/13px 'Liberation Sans', sans-serif;color:#000;white-space:pre;">Amplitude Spectrum</div>
<div style="position:absolute;left:779px;top:843.00px;font:normal 13px/13px 'Liberation Sans', sans-serif;color:#ff0000;white-space:pre;">B</div>
<div style="position:absolute;left:793px;top:837px;width:126px;height:22px;box-sizing:border-box;background:#fff;border-top:1px solid #a0a0a0;border-left:1px solid #a0a0a0;border-right:1px solid #696969;border-bottom:1px solid #c8c8c8;"><div style="position:absolute;inset:0;border-top:1px solid #696969;border-left:1px solid #696969;"></div></div>
<div style="position:absolute;left:901px;top:839px;width:17px;height:19px;box-sizing:border-box;background:#f0f0f0;border-top:1px solid #fff;border-left:1px solid #fff;border-right:1px solid #696969;border-bottom:1px solid #696969;"><div style="position:absolute;inset:0;border-right:1px solid #a0a0a0;border-bottom:1px solid #a0a0a0;"></div></div>
<svg style="position:absolute;left:906px;top:846px" width="7" height="4" shape-rendering="crispEdges" fill="#a0a0a0"><rect x="0" y="0" width="7" height="1"/><rect x="1" y="1" width="5" height="1"/><rect x="2" y="2" width="3" height="1"/><rect x="3" y="3" width="1" height="1"/></svg>
<div style="position:absolute;left:796px;top:843.00px;font:bold 13px/13px 'Liberation Sans', sans-serif;color:#6d6d6d;white-space:pre;">Off</div>
<div style="position:absolute;left:923px;top:837px;width:90px;height:22px;box-sizing:border-box;background:#fff;border-top:1px solid #a0a0a0;border-left:1px solid #a0a0a0;border-right:1px solid #696969;border-bottom:1px solid #c8c8c8;"><div style="position:absolute;inset:0;border-top:1px solid #696969;border-left:1px solid #696969;"></div></div>
<div style="position:absolute;left:995px;top:839px;width:17px;height:19px;box-sizing:border-box;background:#f0f0f0;border-top:1px solid #fff;border-left:1px solid #fff;border-right:1px solid #696969;border-bottom:1px solid #696969;"><div style="position:absolute;inset:0;border-right:1px solid #a0a0a0;border-bottom:1px solid #a0a0a0;"></div></div>
<svg style="position:absolute;left:1000px;top:846px" width="7" height="4" shape-rendering="crispEdges" fill="#a0a0a0"><rect x="0" y="0" width="7" height="1"/><rect x="1" y="1" width="5" height="1"/><rect x="2" y="2" width="3" height="1"/><rect x="3" y="3" width="1" height="1"/></svg>
<div style="position:absolute;left:926px;top:843.00px;font:bold 13px/13px 'Liberation Sans', sans-serif;color:#6d6d6d;white-space:pre;">Off</div>
<div style="position:absolute;left:1021px;top:843.00px;font:bold 13px/13px 'Liberation Sans', sans-serif;color:#000;white-space:pre;">FFT</div>
<div style="position:absolute;left:1052px;top:837px;width:131px;height:22px;box-sizing:border-box;background:#fff;border-top:1px solid #a0a0a0;border-left:1px solid #a0a0a0;border-right:1px solid #696969;border-bottom:1px solid #c8c8c8;"><div style="position:absolute;inset:0;border-top:1px solid #696969;border-left:1px solid #696969;"></div></div>
<div style="position:absolute;left:1165px;top:839px;width:17px;height:19px;box-sizing:border-box;background:#f0f0f0;border-top:1px solid #fff;border-left:1px solid #fff;border-right:1px solid #696969;border-bottom:1px solid #696969;"><div style="position:absolute;inset:0;border-right:1px solid #a0a0a0;border-bottom:1px solid #a0a0a0;"></div></div>
<svg style="position:absolute;left:1170px;top:846px" width="7" height="4" shape-rendering="crispEdges" fill="#000"><rect x="0" y="0" width="7" height="1"/><rect x="1" y="1" width="5" height="1"/><rect x="2" y="2" width="3" height="1"/><rect x="3" y="3" width="1" height="1"/></svg>
<div style="position:absolute;left:1055px;top:843.00px;font:bold 13px/13px 'Liberation Sans', sans-serif;color:#000;white-space:pre;">65536</div>
<div style="position:absolute;left:1197px;top:843.00px;font:bold 13px/13px 'Liberation Sans', sans-serif;color:#000;white-space:pre;">WND</div>
<div style="position:absolute;left:1246px;top:837px;width:225px;height:22px;box-sizing:border-box;background:#fff;border-top:1px solid #a0a0a0;border-left:1px solid #a0a0a0;border-right:1px solid #696969;border-bottom:1px solid #c8c8c8;"><div style="position:absolute;inset:0;border-top:1px solid #696969;border-left:1px solid #696969;"></div></div>
<div style="position:absolute;left:1453px;top:839px;width:17px;height:19px;box-sizing:border-box;background:#f0f0f0;border-top:1px solid #fff;border-left:1px solid #fff;border-right:1px solid #696969;border-bottom:1px solid #696969;"><div style="position:absolute;inset:0;border-right:1px solid #a0a0a0;border-bottom:1px solid #a0a0a0;"></div></div>
<svg style="position:absolute;left:1458px;top:846px" width="7" height="4" shape-rendering="crispEdges" fill="#000"><rect x="0" y="0" width="7" height="1"/><rect x="1" y="1" width="5" height="1"/><rect x="2" y="2" width="3" height="1"/><rect x="3" y="3" width="1" height="1"/></svg>
<div style="position:absolute;left:1249px;top:843.00px;font:bold 13px/13px 'Liberation Sans', sans-serif;color:#000;white-space:pre;">Hann</div>
<div style="position:absolute;left:1474px;top:837px;width:123px;height:22px;box-sizing:border-box;background:#f0f0f0;border-top:1px solid #a0a0a0;border-left:1px solid #a0a0a0;border-right:1px solid #696969;border-bottom:1px solid #c8c8c8;"><div style="position:absolute;inset:0;border-top:1px solid #696969;border-left:1px solid #696969;"></div></div>
<div style="position:absolute;left:1579px;top:839px;width:17px;height:19px;box-sizing:border-box;background:#f0f0f0;border-top:1px solid #fff;border-left:1px solid #fff;border-right:1px solid #696969;border-bottom:1px solid #696969;"><div style="position:absolute;inset:0;border-right:1px solid #a0a0a0;border-bottom:1px solid #a0a0a0;"></div></div>
<svg style="position:absolute;left:1584px;top:846px" width="7" height="4" shape-rendering="crispEdges" fill="#a0a0a0"><rect x="0" y="0" width="7" height="1"/><rect x="1" y="1" width="5" height="1"/><rect x="2" y="2" width="3" height="1"/><rect x="3" y="3" width="1" height="1"/></svg>
<div style="position:absolute;left:1477px;top:843.00px;font:bold 13px/13px 'Liberation Sans', sans-serif;color:#6d6d6d;white-space:pre;">0%</div>
<div style="position:absolute;left:0px;top:859px;width:1600px;height:2px;background:#f0f0f0"></div>
</body></html>
